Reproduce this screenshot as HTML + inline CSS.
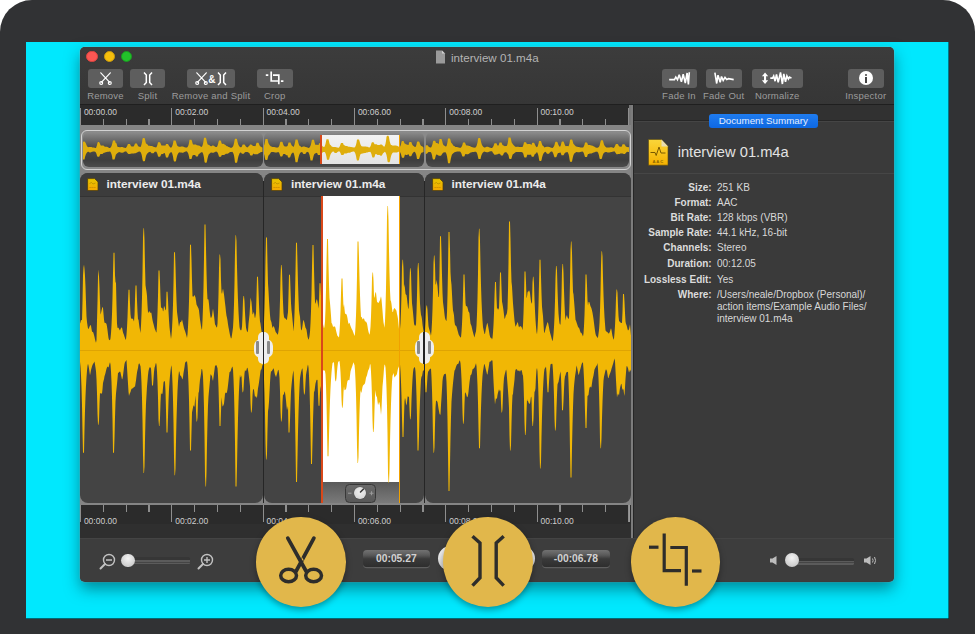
<!DOCTYPE html>
<html><head><meta charset="utf-8">
<style>
*{margin:0;padding:0;box-sizing:border-box}
html,body{width:975px;height:634px;overflow:hidden;background:#ffffff;font-family:"Liberation Sans",sans-serif}
.abs{position:absolute}
#frame{position:absolute;left:0;top:0;width:975px;height:700px;background:#313234;border-radius:32px}
#screen{position:absolute;left:26px;top:42px;width:923px;height:577px;background:#00e8fe;overflow:hidden;box-shadow:inset 0 -1px 0 rgba(0,50,60,0.7),inset -1px 0 0 rgba(0,50,60,0.6)}
#win{position:absolute;left:80px;top:47px;width:814px;height:535.3px;background:#3b3b3b;border-radius:5px;box-shadow:0 7px 15px rgba(0,45,55,0.5),0 0 0 0.6px rgba(190,200,200,0.35);overflow:hidden}
.tl{position:absolute;width:11.6px;height:11.6px;border-radius:50%;top:3.9px}
.title{position:absolute;left:371px;top:4.1px;font-size:11.6px;color:#b4b4b4;line-height:14px}
.btn{position:absolute;top:22px;height:19px;background:#5e5e5e;border-radius:3px}
.lbl{position:absolute;top:42.8px;font-size:9.5px;letter-spacing:0.22px;color:#9c9c9c;text-align:center;line-height:12px;white-space:nowrap}
.rtxt{position:absolute;font-size:8.5px;color:#cfcfcf;line-height:10px;white-space:nowrap}
.row{position:absolute;font-size:10px;line-height:12px;white-space:nowrap}
.row b{position:absolute;right:0;color:#dcdcdc}
.val{position:absolute;left:637px;font-size:10px;color:#d8d8d8;line-height:12.3px;white-space:nowrap}
.ch{position:absolute;top:125px;height:24px;background:#3d3d3d;border-radius:8px 8px 0 0}
.ctext{position:absolute;top:5px;left:26px;font-size:11.8px;font-weight:bold;color:#ececec;line-height:14px;white-space:nowrap}
.gold{position:absolute;width:89.6px;height:89.6px;border-radius:50%;background:#e1b74b;box-shadow:0 3px 6px rgba(0,0,0,0.35)}
</style></head><body>
<div id="frame"></div>
<div id="screen"></div>
<div id="win">
  <!-- title/toolbar -->
  <div class="abs" style="left:0;top:0;width:814px;height:57px;background:linear-gradient(#3c3c3c,#363636)"></div>
  <div class="abs" style="left:0;top:57px;width:814px;height:1px;background:#1f1f1f"></div>
  <div class="tl" style="left:6.3px;background:#fc5753;border:1px solid #de4540"></div>
  <div class="tl" style="left:23.6px;background:#f6bf0c;border:1px solid #c99a10"></div>
  <div class="tl" style="left:40.8px;background:#22c22a;border:1px solid #1a9a22"></div>
  <svg class="abs" style="left:355px;top:3px" width="11" height="14" viewBox="0 0 11 14"><path d="M1 0.5H7L10 3.5V13.5H1Z" fill="#9a9a9a"/><path d="M7 0.5V3.5H10" fill="#cfcfcf"/></svg>
  <div class="title">interview 01.m4a</div>
  <div class="btn" style="left:8px;width:35px"></div>
<div class="lbl" style="left:-14.5px;width:80px">Remove</div>
<div class="btn" style="left:50px;width:35px"></div>
<div class="lbl" style="left:27.5px;width:80px">Split</div>
<div class="btn" style="left:107px;width:48px"></div>
<div class="lbl" style="left:91.0px;width:80px">Remove and Split</div>
<div class="btn" style="left:177px;width:35.5px"></div>
<div class="lbl" style="left:154.75px;width:80px">Crop</div>
<div class="btn" style="left:581.5px;width:35px"></div>
<div class="lbl" style="left:559.0px;width:80px">Fade In</div>
<div class="btn" style="left:626px;width:35.5px"></div>
<div class="lbl" style="left:603.75px;width:80px">Fade Out</div>
<div class="btn" style="left:671.5px;width:51.5px"></div>
<div class="lbl" style="left:657.25px;width:80px">Normalize</div>
<div class="btn" style="left:768px;width:35.5px"></div>
<div class="lbl" style="left:745.75px;width:80px">Inspector</div>
<svg class="abs" style="left:19.5px;top:25px;overflow:visible" width="12" height="13"><g fill="none" stroke="#fff" stroke-width="1.2" stroke-linecap="round"><path d="M0.8 0.8L9.5 10.2M10.3 0.8L1.6 10.2"/><circle cx="1.2" cy="11" r="1.45"/><circle cx="9.8" cy="11" r="1.45"/></g></svg>
<svg class="abs" style="left:63px;top:24.5px;overflow:visible" width="10" height="14"><g fill="none" stroke="#fff" stroke-width="1.5"><path d="M1 0.5L3.3 3V10.5L1 13"/><path d="M9 0.5L6.7 3V10.5L9 13"/></g></svg>
<svg class="abs" style="left:115.5px;top:25px;overflow:visible" width="12" height="13"><g fill="none" stroke="#fff" stroke-width="1.2" stroke-linecap="round"><path d="M0.8 0.8L9.5 10.2M10.3 0.8L1.6 10.2"/><circle cx="1.2" cy="11" r="1.45"/><circle cx="9.8" cy="11" r="1.45"/></g></svg>
<div class="abs" style="left:128.2px;top:25.5px;font-size:10px;font-weight:bold;color:#fff;line-height:14px">&amp;</div>
<svg class="abs" style="left:137px;top:24.5px;overflow:visible" width="10" height="14"><g fill="none" stroke="#fff" stroke-width="1.5"><path d="M1 0.5L3.3 3V10.5L1 13"/><path d="M9 0.5L6.7 3V10.5L9 13"/></g></svg>
<svg class="abs" style="left:184px;top:23px;overflow:visible" width="22" height="16"><g fill="none" stroke="#fff" stroke-width="1.7"><path d="M1.8 5.2H4.3"/><path d="M7.2 1.6V11H14.2"/><path d="M9 5.2H14.8V14.2"/><path d="M16.9 11.2H19.4"/></g></svg>
<svg class="abs" style="left:588.5px;top:24.5px;overflow:visible" width="22" height="14"><path d="M0.2 7.6 L5.5 7.6 L6.8 5 L8.5 7.6 L10.2 2.8 L12.4 9.8 L14.2 2.3 L16.3 11.1 L18.1 1 L19.4 12.4 L20.3 0.2" fill="none" stroke="#fff" stroke-width="1.6" stroke-linejoin="miter" stroke-miterlimit="3"/></svg>
<svg class="abs" style="left:633px;top:24.5px;overflow:visible" width="22" height="14"><path d="M1.9 0.6 L3.7 11.5 L5 3.2 L7.2 10.2 L8.5 4.5 L10.2 8.4 L12 5.4 L13.7 7.6 L15.4 6.7 L20.7 7.6" fill="none" stroke="#fff" stroke-width="1.6" stroke-linejoin="miter" stroke-miterlimit="3"/></svg>
<svg class="abs" style="left:680px;top:23px;overflow:visible" width="34" height="16"><path d="M5.05 2.6L8.2 6.3H6.1V10.3H8.2L5.05 14L1.9 10.3H4V6.3H1.9Z" fill="#fff"/><path d="M10.3 8.1 L12.6 8.1 L13.7 5.9 L15.1 11.2 L16.5 4.5 L18.2 12.4 L20.5 2.5 L22.4 14 L23.8 3.9 L25.5 11.8 L26.9 5.9 L28.4 9 L29.5 7 L31.5 8.1" fill="none" stroke="#fff" stroke-width="1.6" stroke-linejoin="miter" stroke-miterlimit="3"/></svg>
<div class="abs" style="left:778.8px;top:24px;width:14.2px;height:14.2px;border-radius:50%;background:#fff"></div>
<div class="abs" style="left:784.9px;top:26.5px;width:2px;height:2px;background:#444;border-radius:1px"></div>
<div class="abs" style="left:784.9px;top:29.5px;width:2px;height:6.5px;background:#444"></div>
  <!-- ruler top -->
  <div class="abs" style="left:0;top:58px;width:552px;height:20px;background:#2b2b2b"></div>
  <div class="abs" style="left:-0.10px;top:61px;width:1.2px;height:17px;background:#8e8e8e"></div>
<div class="rtxt" style="left:3.90px;top:59.5px">00:00.00</div>
<div class="abs" style="left:22.73px;top:71.5px;width:1.2px;height:6.5px;background:#8e8e8e"></div>
<div class="abs" style="left:45.57px;top:71.5px;width:1.2px;height:6.5px;background:#8e8e8e"></div>
<div class="abs" style="left:68.40px;top:71.5px;width:1.2px;height:6.5px;background:#8e8e8e"></div>
<div class="abs" style="left:91.23px;top:61px;width:1.2px;height:17px;background:#8e8e8e"></div>
<div class="rtxt" style="left:95.23px;top:59.5px">00:02.00</div>
<div class="abs" style="left:114.06px;top:71.5px;width:1.2px;height:6.5px;background:#8e8e8e"></div>
<div class="abs" style="left:136.90px;top:71.5px;width:1.2px;height:6.5px;background:#8e8e8e"></div>
<div class="abs" style="left:159.73px;top:71.5px;width:1.2px;height:6.5px;background:#8e8e8e"></div>
<div class="abs" style="left:182.56px;top:61px;width:1.2px;height:17px;background:#8e8e8e"></div>
<div class="rtxt" style="left:186.56px;top:59.5px">00:04.00</div>
<div class="abs" style="left:205.40px;top:71.5px;width:1.2px;height:6.5px;background:#8e8e8e"></div>
<div class="abs" style="left:228.23px;top:71.5px;width:1.2px;height:6.5px;background:#8e8e8e"></div>
<div class="abs" style="left:251.06px;top:71.5px;width:1.2px;height:6.5px;background:#8e8e8e"></div>
<div class="abs" style="left:273.90px;top:61px;width:1.2px;height:17px;background:#8e8e8e"></div>
<div class="rtxt" style="left:277.90px;top:59.5px">00:06.00</div>
<div class="abs" style="left:296.73px;top:71.5px;width:1.2px;height:6.5px;background:#8e8e8e"></div>
<div class="abs" style="left:319.56px;top:71.5px;width:1.2px;height:6.5px;background:#8e8e8e"></div>
<div class="abs" style="left:342.39px;top:71.5px;width:1.2px;height:6.5px;background:#8e8e8e"></div>
<div class="abs" style="left:365.23px;top:61px;width:1.2px;height:17px;background:#8e8e8e"></div>
<div class="rtxt" style="left:369.23px;top:59.5px">00:08.00</div>
<div class="abs" style="left:388.06px;top:71.5px;width:1.2px;height:6.5px;background:#8e8e8e"></div>
<div class="abs" style="left:410.89px;top:71.5px;width:1.2px;height:6.5px;background:#8e8e8e"></div>
<div class="abs" style="left:433.73px;top:71.5px;width:1.2px;height:6.5px;background:#8e8e8e"></div>
<div class="abs" style="left:456.56px;top:61px;width:1.2px;height:17px;background:#8e8e8e"></div>
<div class="rtxt" style="left:460.56px;top:59.5px">00:10.00</div>
<div class="abs" style="left:479.39px;top:71.5px;width:1.2px;height:6.5px;background:#8e8e8e"></div>
<div class="abs" style="left:502.23px;top:71.5px;width:1.2px;height:6.5px;background:#8e8e8e"></div>
<div class="abs" style="left:525.06px;top:71.5px;width:1.2px;height:6.5px;background:#8e8e8e"></div>
<div class="abs" style="left:547.89px;top:61px;width:1.2px;height:17px;background:#8e8e8e"></div>
<div class="rtxt" style="left:551.89px;top:59.5px">00:12.00</div><div class="abs" style="left:549px;top:58px;width:2px;height:20px;background:#777"></div>
  <!-- main area -->
  <div class="abs" style="left:0;top:78px;width:552px;height:380px;background:#858585"></div>
  <div class="abs" style="left:1px;top:82.5px;width:550px;height:40.3px;border:1.8px solid #d2d2d2;border-radius:6px;background:#8a8a8a"></div>
<div class="abs" style="left:3px;top:85.3px;width:179.5px;height:34.7px;border-radius:6px;background:linear-gradient(#8c8c8c 0%,#4a4a4a 45%,#3e3e3e 80%,#4c4c4c 100%)"></div>
<div class="abs" style="left:184px;top:85.3px;width:159.5px;height:34.7px;border-radius:6px;background:linear-gradient(#8c8c8c 0%,#4a4a4a 45%,#3e3e3e 80%,#4c4c4c 100%)"></div>
<div class="abs" style="left:345.5px;top:85.3px;width:203.5px;height:34.7px;border-radius:6px;background:linear-gradient(#8c8c8c 0%,#4a4a4a 45%,#3e3e3e 80%,#4c4c4c 100%)"></div>
<div class="abs" style="left:240.8px;top:87.8px;width:78.5px;height:29.2px;background:linear-gradient(#f2f2f2,#e4e4e4)"></div>
<svg class="abs" style="left:0;top:0" width="552" height="130"><defs><clipPath id="ovc"><rect x="83" y="132" width="179.5" height="34"/><rect x="264" y="132" width="159.5" height="34"/><rect x="425.5" y="132" width="203.5" height="34"/></clipPath></defs><g transform="translate(-80 -47)" clip-path="url(#ovc)"><path d="M83.0 141.9 L83.5 141.6 L84.0 141.6 L84.5 141.6 L85.0 142.0 L85.5 142.7 L86.0 143.7 L86.5 145.0 L87.0 146.2 L87.5 146.7 L88.0 147.0 L88.5 147.2 L89.0 147.1 L89.5 147.0 L90.0 146.9 L90.5 146.9 L91.0 146.9 L91.5 147.0 L92.0 147.2 L92.5 147.4 L93.0 147.5 L93.5 147.5 L94.0 147.6 L94.5 147.7 L95.0 147.8 L95.5 148.0 L96.0 148.0 L96.5 146.6 L97.0 145.0 L97.5 142.7 L98.0 142.1 L98.5 142.1 L99.0 142.1 L99.5 142.7 L100.0 143.7 L100.5 145.1 L101.0 145.8 L101.5 145.6 L102.0 145.4 L102.5 145.4 L103.0 145.4 L103.5 145.5 L104.0 146.0 L104.5 146.5 L105.0 146.7 L105.5 146.8 L106.0 146.8 L106.5 146.8 L107.0 146.8 L107.5 147.0 L108.0 147.3 L108.5 147.6 L109.0 147.9 L109.5 148.0 L110.0 147.9 L110.5 147.5 L111.0 146.9 L111.5 146.0 L112.0 144.6 L112.5 142.4 L113.0 140.5 L113.5 140.5 L114.0 140.5 L114.5 140.5 L115.0 140.5 L115.5 142.6 L116.0 143.3 L116.5 143.3 L117.0 145.3 L117.5 146.8 L118.0 147.1 L118.5 147.1 L119.0 147.1 L119.5 147.2 L120.0 147.2 L120.5 147.2 L121.0 147.1 L121.5 147.1 L122.0 147.1 L122.5 147.1 L123.0 147.3 L123.5 147.5 L124.0 147.6 L124.5 147.7 L125.0 147.8 L125.5 147.9 L126.0 147.7 L126.5 147.1 L127.0 146.3 L127.5 145.0 L128.0 143.9 L128.5 143.9 L129.0 143.9 L129.5 143.9 L130.0 143.9 L130.5 145.2 L131.0 146.1 L131.5 146.4 L132.0 146.4 L132.5 146.4 L133.0 146.4 L133.5 146.4 L134.0 146.1 L134.5 144.7 L135.0 143.6 L135.5 143.6 L136.0 143.6 L136.5 143.6 L137.0 143.6 L137.5 144.9 L138.0 145.8 L138.5 146.5 L139.0 146.5 L139.5 146.8 L140.0 147.1 L140.5 147.0 L141.0 146.0 L141.5 144.6 L142.0 142.4 L142.5 139.0 L143.0 138.1 L143.5 138.1 L144.0 138.1 L144.5 138.1 L145.0 139.3 L145.5 141.7 L146.0 143.5 L146.5 143.8 L147.0 144.1 L147.5 144.5 L148.0 145.3 L148.5 145.8 L149.0 145.8 L149.5 145.8 L150.0 145.8 L150.5 145.9 L151.0 145.9 L151.5 145.9 L152.0 146.0 L152.5 146.3 L153.0 146.5 L153.5 146.7 L154.0 146.9 L154.5 147.0 L155.0 147.2 L155.5 147.3 L156.0 147.4 L156.5 146.9 L157.0 145.9 L157.5 144.5 L158.0 142.2 L158.5 142.2 L159.0 142.2 L159.5 142.2 L160.0 142.2 L160.5 143.2 L161.0 144.6 L161.5 145.5 L162.0 145.5 L162.5 145.5 L163.0 145.6 L163.5 145.4 L164.0 145.4 L164.5 145.4 L165.0 145.4 L165.5 145.5 L166.0 144.1 L166.5 144.1 L167.0 144.1 L167.5 144.1 L168.0 144.1 L168.5 144.9 L169.0 145.8 L169.5 146.6 L170.0 147.1 L170.5 147.4 L171.0 147.7 L171.5 147.2 L172.0 146.4 L172.5 145.2 L173.0 143.4 L173.5 140.4 L174.0 140.4 L174.5 140.4 L175.0 140.4 L175.5 140.4 L176.0 141.8 L176.5 143.6 L177.0 144.9 L177.5 145.9 L178.0 146.2 L178.5 146.5 L179.0 146.8 L179.5 146.7 L180.0 146.7 L180.5 146.7 L181.0 146.6 L181.5 146.5 L182.0 146.5 L182.5 146.5 L183.0 146.6 L183.5 146.8 L184.0 147.0 L184.5 147.2 L185.0 147.3 L185.5 147.4 L186.0 147.5 L186.5 147.6 L187.0 147.6 L187.5 147.1 L188.0 146.2 L188.5 144.9 L189.0 142.9 L189.5 139.7 L190.0 139.7 L190.5 139.7 L191.0 139.7 L191.5 139.7 L192.0 141.2 L192.5 143.1 L193.0 144.5 L193.5 144.5 L194.0 144.4 L194.5 144.4 L195.0 144.4 L195.5 144.5 L196.0 144.6 L196.5 144.9 L197.0 145.2 L197.5 145.3 L198.0 145.4 L198.5 145.5 L199.0 145.6 L199.5 145.7 L200.0 146.1 L200.5 146.5 L201.0 146.8 L201.5 147.0 L202.0 146.6 L202.5 145.4 L203.0 143.7 L203.5 141.0 L204.0 137.7 L204.5 137.7 L205.0 137.7 L205.5 137.7 L206.0 137.7 L206.5 140.1 L207.0 142.3 L207.5 143.9 L208.0 144.8 L208.5 144.8 L209.0 144.8 L209.5 145.2 L210.0 145.7 L210.5 146.0 L211.0 146.3 L211.5 146.2 L212.0 145.8 L212.5 145.6 L213.0 145.6 L213.5 145.6 L214.0 145.9 L214.5 146.2 L215.0 146.5 L215.5 146.9 L216.0 146.9 L216.5 147.0 L217.0 146.8 L217.5 145.8 L218.0 144.3 L218.5 141.9 L219.0 140.6 L219.5 140.6 L220.0 140.6 L220.5 140.6 L221.0 141.1 L221.5 143.1 L222.0 144.0 L222.5 143.8 L223.0 143.8 L223.5 143.8 L224.0 144.1 L224.5 144.4 L225.0 144.7 L225.5 145.1 L226.0 145.4 L226.5 145.9 L227.0 146.2 L227.5 146.3 L228.0 146.6 L228.5 146.9 L229.0 147.1 L229.5 147.3 L230.0 147.5 L230.5 147.7 L231.0 147.8 L231.5 147.7 L232.0 147.4 L232.5 147.1 L233.0 146.4 L233.5 145.2 L234.0 143.3 L234.5 140.4 L235.0 138.8 L235.5 138.8 L236.0 138.8 L236.5 138.8 L237.0 139.3 L237.5 141.8 L238.0 143.5 L238.5 144.9 L239.0 145.8 L239.5 146.6 L240.0 147.1 L240.5 147.3 L241.0 147.3 L241.5 147.0 L242.0 146.2 L242.5 144.8 L243.0 144.5 L243.5 144.5 L244.0 144.5 L244.5 144.5 L245.0 145.0 L245.5 145.9 L246.0 146.6 L246.5 147.1 L247.0 147.3 L247.5 147.4 L248.0 146.8 L248.5 146.5 L249.0 146.1 L249.5 145.4 L250.0 144.6 L250.5 144.6 L251.0 144.6 L251.5 144.8 L252.0 145.0 L252.5 145.5 L253.0 145.9 L253.5 145.9 L254.0 145.9 L254.5 145.9 L255.0 146.2 L255.5 146.0 L256.0 144.5 L256.5 142.8 L257.0 142.8 L257.5 142.8 L258.0 142.8 L258.5 142.8 L259.0 144.0 L259.5 145.2 L260.0 146.1 L260.5 146.6 L261.0 146.8 L261.5 147.1 L262.0 147.4 L262.5 147.5 L263.0 147.3 L263.5 146.6 L264.0 145.6 L264.5 143.9 L265.0 141.2 L265.5 139.0 L266.0 139.0 L266.5 139.0 L267.0 139.0 L267.5 139.0 L268.0 141.5 L268.5 143.3 L269.0 144.0 L269.5 144.9 L270.0 145.5 L270.5 146.1 L271.0 146.5 L271.5 146.6 L272.0 146.7 L272.5 147.0 L273.0 147.0 L273.5 147.0 L274.0 147.0 L274.5 147.1 L275.0 147.2 L275.5 147.3 L276.0 147.4 L276.5 147.5 L277.0 147.5 L277.5 147.6 L278.0 147.4 L278.5 147.1 L279.0 146.2 L279.5 144.9 L280.0 142.8 L280.5 141.7 L281.0 141.7 L281.5 141.7 L282.0 141.7 L282.5 142.1 L283.0 143.8 L283.5 145.0 L284.0 146.0 L284.5 146.3 L285.0 146.4 L285.5 146.4 L286.0 146.4 L286.5 146.5 L287.0 146.2 L287.5 145.9 L288.0 144.4 L288.5 142.6 L289.0 142.6 L289.5 142.6 L290.0 142.6 L290.5 142.6 L291.0 143.9 L291.5 145.1 L292.0 145.7 L292.5 146.1 L293.0 146.5 L293.5 146.9 L294.0 146.0 L294.5 144.5 L295.0 142.2 L295.5 139.5 L296.0 139.5 L296.5 139.5 L297.0 139.5 L297.5 139.5 L298.0 141.5 L298.5 143.3 L299.0 144.7 L299.5 145.7 L300.0 146.0 L300.5 146.3 L301.0 146.8 L301.5 147.2 L302.0 147.0 L302.5 146.7 L303.0 146.5 L303.5 146.5 L304.0 146.5 L304.5 146.6 L305.0 146.8 L305.5 147.0 L306.0 147.1 L306.5 147.2 L307.0 147.3 L307.5 147.5 L308.0 147.8 L308.5 147.9 L309.0 147.8 L309.5 147.4 L310.0 146.8 L310.5 145.8 L311.0 144.2 L311.5 141.8 L312.0 139.7 L312.5 139.7 L313.0 139.7 L313.5 139.7 L314.0 139.7 L314.5 142.0 L315.0 143.8 L315.5 145.0 L316.0 144.8 L316.5 144.8 L317.0 144.8 L317.5 144.8 L318.0 145.0 L318.5 144.9 L319.0 143.3 L319.5 143.3 L320.0 143.3 L320.5 143.3 L321.0 143.3 L321.5 144.5 L322.0 145.6 L322.5 146.3 L323.0 146.7 L323.5 146.8 L324.0 147.0 L324.5 146.7 L325.0 145.6 L325.5 143.9 L326.0 141.4 L326.5 139.2 L327.0 139.2 L327.5 139.2 L328.0 139.2 L328.5 139.2 L329.0 141.6 L329.5 143.4 L330.0 144.7 L330.5 145.1 L331.0 145.6 L331.5 146.2 L332.0 146.8 L332.5 146.8 L333.0 146.9 L333.5 147.1 L334.0 147.0 L334.5 147.0 L335.0 147.0 L335.5 147.0 L336.0 147.2 L336.5 147.3 L337.0 147.5 L337.5 147.6 L338.0 147.8 L338.5 147.8 L339.0 147.4 L339.5 146.8 L340.0 145.8 L340.5 144.2 L341.0 142.9 L341.5 142.9 L342.0 142.9 L342.5 142.9 L343.0 142.9 L343.5 144.4 L344.0 145.2 L344.5 145.2 L345.0 145.6 L345.5 146.0 L346.0 146.0 L346.5 146.0 L347.0 146.1 L347.5 146.2 L348.0 146.4 L348.5 146.7 L349.0 146.8 L349.5 146.8 L350.0 146.8 L350.5 146.9 L351.0 147.0 L351.5 147.1 L352.0 147.2 L352.5 147.3 L353.0 147.3 L353.5 147.4 L354.0 147.5 L354.5 147.6 L355.0 147.0 L355.5 146.2 L356.0 144.8 L356.5 142.7 L357.0 139.4 L357.5 139.4 L358.0 139.4 L358.5 139.4 L359.0 139.4 L359.5 140.9 L360.0 142.9 L360.5 144.4 L361.0 145.5 L361.5 146.3 L362.0 146.3 L362.5 146.4 L363.0 146.4 L363.5 146.4 L364.0 146.4 L364.5 146.4 L365.0 146.5 L365.5 146.6 L366.0 146.6 L366.5 146.7 L367.0 146.7 L367.5 146.8 L368.0 147.0 L368.5 147.3 L369.0 147.4 L369.5 147.5 L370.0 147.1 L370.5 146.2 L371.0 144.9 L371.5 142.9 L372.0 142.3 L372.5 142.3 L373.0 142.3 L373.5 142.3 L374.0 143.1 L374.5 144.3 L375.0 144.2 L375.5 144.2 L376.0 144.2 L376.5 144.2 L377.0 144.6 L377.5 145.0 L378.0 145.0 L378.5 145.0 L379.0 144.9 L379.5 144.9 L380.0 144.7 L380.5 144.5 L381.0 144.5 L381.5 144.5 L382.0 144.8 L382.5 145.3 L383.0 145.8 L383.5 146.3 L384.0 146.7 L384.5 146.6 L385.0 145.5 L385.5 143.8 L386.0 141.1 L386.5 136.9 L387.0 135.8 L387.5 135.8 L388.0 135.8 L388.5 135.8 L389.0 137.3 L389.5 140.2 L390.0 142.4 L390.5 144.0 L391.0 144.9 L391.5 145.0 L392.0 145.2 L392.5 145.6 L393.0 145.7 L393.5 145.6 L394.0 145.5 L394.5 145.5 L395.0 145.5 L395.5 145.6 L396.0 145.6 L396.5 145.7 L397.0 145.8 L397.5 146.0 L398.0 146.2 L398.5 146.4 L399.0 146.9 L399.5 147.2 L400.0 146.8 L400.5 145.8 L401.0 144.2 L401.5 141.8 L402.0 141.1 L402.5 141.1 L403.0 141.1 L403.5 141.1 L404.0 142.0 L404.5 143.4 L405.0 143.4 L405.5 143.9 L406.0 144.3 L406.5 144.4 L407.0 144.4 L407.5 144.7 L408.0 145.1 L408.5 145.0 L409.0 143.0 L409.5 142.0 L410.0 142.0 L410.5 142.0 L411.0 142.0 L411.5 142.3 L412.0 144.0 L412.5 145.1 L413.0 145.5 L413.5 145.9 L414.0 146.3 L414.5 146.8 L415.0 147.0 L415.5 146.9 L416.0 145.9 L416.5 144.4 L417.0 142.1 L417.5 141.5 L418.0 141.5 L418.5 141.5 L419.0 141.5 L419.5 142.3 L420.0 143.9 L420.5 145.1 L421.0 145.7 L421.5 146.1 L422.0 146.2 L422.5 146.5 L423.0 146.9 L423.5 147.2 L424.0 147.4 L424.5 147.4 L425.0 146.7 L425.5 145.6 L426.0 145.3 L426.5 145.3 L427.0 145.3 L427.5 145.3 L428.0 145.7 L428.5 146.5 L429.0 147.0 L429.5 147.2 L430.0 147.3 L430.5 147.4 L431.0 147.4 L431.5 146.7 L432.0 145.6 L432.5 144.0 L433.0 141.4 L433.5 140.7 L434.0 140.7 L434.5 140.7 L435.0 140.7 L435.5 141.6 L436.0 143.0 L436.5 143.0 L437.0 143.0 L437.5 143.3 L438.0 143.6 L438.5 144.2 L439.0 142.4 L439.5 138.9 L440.0 138.9 L440.5 138.9 L441.0 138.9 L441.5 138.9 L442.0 140.5 L442.5 142.6 L443.0 144.2 L443.5 145.0 L444.0 145.4 L444.5 145.7 L445.0 146.1 L445.5 146.4 L446.0 146.5 L446.5 145.9 L447.0 144.4 L447.5 142.1 L448.0 138.4 L448.5 138.4 L449.0 138.4 L449.5 138.4 L450.0 138.4 L450.5 140.1 L451.0 142.3 L451.5 143.1 L452.0 143.5 L452.5 144.3 L453.0 145.1 L453.5 145.8 L454.0 145.9 L454.5 146.1 L455.0 146.7 L455.5 146.9 L456.0 147.0 L456.5 147.0 L457.0 147.0 L457.5 147.2 L458.0 147.3 L458.5 147.5 L459.0 147.6 L459.5 147.7 L460.0 147.8 L460.5 147.8 L461.0 147.5 L461.5 146.8 L462.0 145.9 L462.5 144.4 L463.0 142.6 L463.5 142.6 L464.0 142.6 L464.5 142.6 L465.0 142.6 L465.5 143.9 L466.0 145.1 L466.5 145.4 L467.0 145.4 L467.5 145.4 L468.0 145.5 L468.5 145.7 L469.0 145.9 L469.5 145.9 L470.0 146.0 L470.5 146.4 L471.0 146.8 L471.5 146.9 L472.0 147.0 L472.5 147.2 L473.0 147.4 L473.5 147.5 L474.0 147.6 L474.5 147.7 L475.0 147.5 L475.5 147.4 L476.0 147.0 L476.5 146.1 L477.0 144.6 L477.5 142.4 L478.0 139.0 L478.5 138.1 L479.0 138.1 L479.5 138.1 L480.0 138.1 L480.5 139.3 L481.0 141.7 L481.5 143.5 L482.0 144.9 L482.5 145.8 L483.0 146.6 L483.5 147.1 L484.0 147.3 L484.5 147.4 L485.0 147.4 L485.5 147.2 L486.0 147.0 L486.5 146.8 L487.0 146.8 L487.5 146.8 L488.0 146.8 L488.5 147.0 L489.0 147.2 L489.5 147.4 L490.0 147.6 L490.5 147.8 L491.0 147.9 L491.5 147.9 L492.0 147.9 L492.5 147.5 L493.0 146.9 L493.5 146.0 L494.0 144.5 L494.5 143.2 L495.0 143.2 L495.5 143.2 L496.0 143.2 L496.5 143.2 L497.0 144.6 L497.5 145.5 L498.0 145.5 L498.5 145.5 L499.0 144.2 L499.5 142.4 L500.0 142.4 L500.5 142.4 L501.0 142.4 L501.5 142.4 L502.0 143.7 L502.5 145.0 L503.0 145.2 L503.5 145.4 L504.0 145.7 L504.5 146.1 L505.0 146.2 L505.5 146.1 L506.0 146.1 L506.5 145.9 L507.0 145.6 L507.5 144.0 L508.0 141.4 L508.5 137.4 L509.0 137.4 L509.5 137.4 L510.0 137.4 L510.5 137.4 L511.0 139.3 L511.5 141.7 L512.0 143.2 L512.5 143.6 L513.0 144.4 L513.5 145.1 L514.0 145.6 L514.5 146.1 L515.0 146.6 L515.5 146.8 L516.0 146.9 L516.5 146.8 L517.0 146.7 L517.5 146.7 L518.0 146.7 L518.5 146.8 L519.0 147.0 L519.5 147.0 L520.0 147.0 L520.5 147.0 L521.0 147.0 L521.5 147.1 L522.0 147.1 L522.5 146.9 L523.0 146.0 L523.5 144.5 L524.0 142.3 L524.5 142.3 L525.0 142.3 L525.5 142.3 L526.0 142.3 L526.5 143.3 L527.0 144.2 L527.5 144.1 L528.0 144.1 L528.5 144.0 L529.0 144.0 L529.5 144.0 L530.0 144.1 L530.5 144.2 L531.0 144.6 L531.5 145.0 L532.0 143.3 L532.5 142.8 L533.0 142.8 L533.5 142.8 L534.0 142.8 L534.5 143.4 L535.0 144.8 L535.5 145.8 L536.0 146.5 L536.5 147.1 L537.0 147.2 L537.5 146.4 L538.0 145.2 L538.5 143.4 L539.0 141.1 L539.5 141.1 L540.0 141.1 L540.5 141.1 L541.0 141.1 L541.5 142.8 L542.0 144.3 L542.5 145.4 L543.0 145.8 L543.5 146.2 L544.0 146.8 L544.5 147.4 L545.0 147.2 L545.5 147.1 L546.0 147.0 L546.5 146.8 L547.0 146.7 L547.5 146.7 L548.0 146.7 L548.5 146.7 L549.0 146.9 L549.5 147.1 L550.0 147.3 L550.5 147.5 L551.0 147.6 L551.5 147.8 L552.0 147.9 L552.5 148.0 L553.0 147.6 L553.5 147.1 L554.0 146.2 L554.5 144.9 L555.0 142.9 L555.5 141.8 L556.0 141.8 L556.5 141.8 L557.0 141.8 L557.5 142.2 L558.0 143.8 L558.5 145.1 L559.0 146.0 L559.5 146.5 L560.0 146.8 L560.5 145.9 L561.0 144.5 L561.5 142.2 L562.0 141.6 L562.5 141.6 L563.0 141.6 L563.5 141.6 L564.0 142.4 L564.5 144.0 L565.0 145.2 L565.5 146.1 L566.0 146.2 L566.5 146.1 L567.0 146.1 L567.5 146.1 L568.0 146.3 L568.5 146.3 L569.0 145.1 L569.5 143.2 L570.0 140.2 L570.5 139.4 L571.0 139.4 L571.5 139.4 L572.0 139.4 L572.5 140.4 L573.0 142.6 L573.5 144.1 L574.0 144.3 L574.5 144.9 L575.0 145.4 L575.5 146.0 L576.0 146.5 L576.5 146.6 L577.0 146.7 L577.5 146.8 L578.0 147.0 L578.5 147.1 L579.0 147.1 L579.5 147.2 L580.0 147.2 L580.5 147.4 L581.0 147.5 L581.5 147.5 L582.0 147.5 L582.5 147.6 L583.0 147.6 L583.5 147.0 L584.0 146.1 L584.5 144.7 L585.0 142.6 L585.5 142.6 L586.0 142.6 L586.5 142.6 L587.0 142.6 L587.5 143.6 L588.0 144.9 L588.5 145.0 L589.0 145.0 L589.5 145.0 L590.0 145.1 L590.5 145.2 L591.0 145.4 L591.5 145.5 L592.0 145.6 L592.5 145.7 L593.0 145.9 L593.5 146.2 L594.0 146.4 L594.5 146.8 L595.0 147.1 L595.5 147.4 L596.0 147.6 L596.5 147.7 L597.0 147.8 L597.5 147.8 L598.0 147.6 L598.5 147.3 L599.0 146.8 L599.5 145.7 L600.0 144.1 L600.5 141.7 L601.0 140.3 L601.5 140.3 L602.0 140.3 L602.5 140.3 L603.0 140.8 L603.5 142.8 L604.0 144.4 L604.5 145.5 L605.0 146.3 L605.5 146.8 L606.0 147.3 L606.5 147.4 L607.0 147.4 L607.5 147.5 L608.0 147.5 L608.5 147.5 L609.0 147.5 L609.5 147.4 L610.0 147.3 L610.5 147.2 L611.0 147.2 L611.5 147.2 L612.0 147.3 L612.5 147.6 L613.0 147.8 L613.5 147.9 L614.0 147.6 L614.5 147.0 L615.0 146.1 L615.5 144.7 L616.0 143.9 L616.5 143.9 L617.0 143.9 L617.5 143.9 L618.0 144.2 L618.5 145.3 L619.0 146.2 L619.5 146.6 L620.0 146.6 L620.5 146.7 L621.0 146.7 L621.5 146.7 L622.0 145.8 L622.5 144.3 L623.0 144.3 L623.5 144.3 L624.0 144.3 L624.5 144.3 L625.0 145.0 L625.5 146.0 L626.0 146.6 L626.5 146.8 L627.0 146.9 L627.5 147.1 L628.0 147.2 L628.5 147.3 L629.0 147.1 L629.0 152.1 L628.5 152.1 L628.0 152.0 L627.5 151.8 L627.0 151.7 L626.5 152.2 L626.0 152.7 L625.5 153.3 L625.0 154.1 L624.5 154.1 L624.0 154.1 L623.5 153.9 L623.0 153.6 L622.5 153.6 L622.0 153.6 L621.5 153.4 L621.0 153.2 L620.5 153.4 L620.0 153.7 L619.5 154.1 L619.0 154.1 L618.5 154.1 L618.0 154.0 L617.5 154.2 L617.0 154.2 L616.5 154.2 L616.0 153.5 L615.5 152.8 L615.0 152.0 L614.5 151.3 L614.0 151.4 L613.5 151.5 L613.0 151.6 L612.5 151.8 L612.0 151.9 L611.5 152.0 L611.0 152.1 L610.5 152.2 L610.0 152.3 L609.5 152.4 L609.0 152.6 L608.5 152.6 L608.0 152.6 L607.5 152.6 L607.0 152.3 L606.5 152.1 L606.0 152.0 L605.5 152.1 L605.0 152.3 L604.5 152.5 L604.0 152.8 L603.5 153.6 L603.0 154.6 L602.5 156.0 L602.0 158.0 L601.5 158.9 L601.0 158.9 L600.5 158.9 L600.0 158.9 L599.5 158.2 L599.0 155.5 L598.5 153.7 L598.0 152.6 L597.5 151.9 L597.0 151.6 L596.5 151.7 L596.0 151.8 L595.5 151.8 L595.0 151.9 L594.5 152.2 L594.0 152.4 L593.5 152.6 L593.0 152.7 L592.5 153.0 L592.0 153.3 L591.5 153.4 L591.0 153.4 L590.5 153.4 L590.0 153.4 L589.5 153.6 L589.0 154.0 L588.5 154.0 L588.0 154.1 L587.5 155.3 L587.0 157.0 L586.5 157.0 L586.0 157.0 L585.5 157.0 L585.0 157.0 L584.5 155.5 L584.0 153.8 L583.5 152.6 L583.0 151.9 L582.5 151.5 L582.0 151.5 L581.5 151.7 L581.0 151.8 L580.5 152.0 L580.0 152.1 L579.5 152.3 L579.0 152.3 L578.5 152.3 L578.0 152.3 L577.5 152.2 L577.0 151.9 L576.5 152.0 L576.0 152.2 L575.5 152.5 L575.0 152.9 L574.5 153.3 L574.0 153.9 L573.5 155.1 L573.0 156.7 L572.5 158.9 L572.0 161.8 L571.5 161.8 L571.0 161.8 L570.5 161.8 L570.0 161.8 L569.5 159.2 L569.0 156.1 L568.5 154.1 L568.0 152.9 L567.5 152.1 L567.0 152.1 L566.5 152.2 L566.0 152.4 L565.5 152.4 L565.0 152.8 L564.5 153.5 L564.0 154.6 L563.5 155.3 L563.0 155.3 L562.5 155.3 L562.0 155.3 L561.5 155.3 L561.0 153.7 L560.5 152.6 L560.0 152.5 L559.5 152.7 L559.0 152.9 L558.5 153.0 L558.0 153.1 L557.5 154.0 L557.0 155.2 L556.5 156.8 L556.0 157.2 L555.5 157.2 L555.0 157.2 L554.5 157.2 L554.0 156.1 L553.5 154.2 L553.0 152.9 L552.5 152.1 L552.0 151.5 L551.5 151.5 L551.0 151.5 L550.5 151.9 L550.0 152.3 L549.5 152.9 L549.0 153.8 L548.5 153.8 L548.0 153.8 L547.5 153.8 L547.0 153.8 L546.5 153.0 L546.0 152.2 L545.5 151.8 L545.0 151.9 L544.5 152.2 L544.0 152.7 L543.5 153.5 L543.0 154.5 L542.5 155.9 L542.0 157.8 L541.5 160.3 L541.0 160.9 L540.5 160.9 L540.0 160.9 L539.5 160.9 L539.0 159.2 L538.5 156.1 L538.0 154.2 L537.5 152.9 L537.0 152.1 L536.5 152.5 L536.0 153.4 L535.5 153.7 L535.0 153.7 L534.5 154.7 L534.0 156.1 L533.5 156.8 L533.0 156.8 L532.5 156.8 L532.0 156.8 L531.5 156.3 L531.0 154.4 L530.5 154.7 L530.0 154.8 L529.5 154.8 L529.0 154.8 L528.5 154.7 L528.0 154.7 L527.5 154.5 L527.0 155.5 L526.5 157.2 L526.0 157.6 L525.5 157.6 L525.0 157.6 L524.5 157.6 L524.0 156.5 L523.5 154.4 L523.0 153.0 L522.5 152.4 L522.0 152.3 L521.5 152.1 L521.0 152.0 L520.5 152.1 L520.0 152.1 L519.5 152.1 L519.0 152.0 L518.5 152.0 L518.0 152.0 L517.5 152.0 L517.0 152.0 L516.5 151.9 L516.0 151.9 L515.5 152.2 L515.0 152.7 L514.5 153.1 L514.0 153.4 L513.5 153.9 L513.0 154.0 L512.5 155.0 L512.0 156.5 L511.5 158.6 L511.0 159.1 L510.5 159.1 L510.0 159.1 L509.5 159.1 L509.0 157.7 L508.5 155.2 L508.0 154.3 L507.5 153.7 L507.0 153.1 L506.5 152.6 L506.0 152.1 L505.5 152.2 L505.0 152.4 L504.5 152.6 L504.0 153.1 L503.5 154.0 L503.0 155.3 L502.5 155.6 L502.0 155.6 L501.5 155.6 L501.0 155.6 L500.5 154.8 L500.0 153.7 L499.5 153.7 L499.0 153.7 L498.5 153.8 L498.0 154.0 L497.5 154.3 L497.0 154.4 L496.5 154.4 L496.0 154.5 L495.5 154.8 L495.0 154.8 L494.5 154.8 L494.0 154.3 L493.5 153.6 L493.0 152.9 L492.5 152.0 L492.0 151.3 L491.5 151.3 L491.0 151.3 L490.5 151.3 L490.0 151.4 L489.5 151.6 L489.0 151.8 L488.5 152.1 L488.0 152.3 L487.5 152.3 L487.0 152.3 L486.5 152.3 L486.0 152.1 L485.5 152.0 L485.0 151.8 L484.5 151.6 L484.0 151.8 L483.5 152.1 L483.0 152.4 L482.5 153.1 L482.0 154.0 L481.5 155.1 L481.0 156.7 L480.5 158.9 L480.0 158.9 L479.5 158.9 L479.0 158.9 L478.5 158.9 L478.0 157.0 L477.5 154.7 L477.0 153.2 L476.5 152.3 L476.0 151.7 L475.5 151.7 L475.0 151.8 L474.5 151.8 L474.0 151.9 L473.5 151.9 L473.0 151.9 L472.5 152.1 L472.0 152.3 L471.5 152.3 L471.0 152.4 L470.5 152.6 L470.0 152.9 L469.5 153.3 L469.0 153.7 L468.5 154.1 L468.0 154.2 L467.5 154.2 L467.0 154.2 L466.5 154.2 L466.0 154.1 L465.5 153.9 L465.0 154.8 L464.5 156.2 L464.0 156.6 L463.5 156.6 L463.0 156.6 L462.5 156.6 L462.0 155.6 L461.5 153.8 L461.0 152.7 L460.5 151.9 L460.0 151.5 L459.5 151.4 L459.0 151.5 L458.5 151.5 L458.0 151.5 L457.5 151.6 L457.0 151.6 L456.5 151.7 L456.0 151.8 L455.5 152.0 L455.0 152.0 L454.5 152.3 L454.0 152.7 L453.5 153.0 L453.0 153.5 L452.5 154.0 L452.0 154.6 L451.5 156.0 L451.0 157.9 L450.5 160.5 L450.0 163.2 L449.5 163.2 L449.0 163.2 L448.5 163.2 L448.0 163.2 L447.5 159.4 L447.0 156.3 L446.5 154.2 L446.0 152.9 L445.5 152.3 L445.0 152.3 L444.5 152.3 L444.0 152.4 L443.5 152.5 L443.0 152.8 L442.5 153.6 L442.0 154.2 L441.5 154.9 L441.0 155.7 L440.5 155.8 L440.0 155.8 L439.5 155.8 L439.0 155.7 L438.5 155.5 L438.0 155.2 L437.5 154.9 L437.0 154.6 L436.5 154.6 L436.0 155.1 L435.5 156.7 L435.0 158.8 L434.5 159.4 L434.0 159.4 L433.5 159.4 L433.0 159.4 L432.5 157.9 L432.0 155.3 L431.5 153.6 L431.0 152.5 L430.5 151.9 L430.0 151.9 L429.5 152.0 L429.0 152.0 L428.5 152.1 L428.0 152.4 L427.5 153.1 L427.0 153.8 L426.5 153.8 L426.0 153.8 L425.5 153.8 L425.0 153.8 L424.5 152.8 L424.0 152.1 L423.5 152.1 L423.0 152.2 L422.5 152.4 L422.0 152.5 L421.5 152.7 L421.0 153.5 L420.5 154.5 L420.0 155.9 L419.5 157.7 L419.0 159.1 L418.5 159.1 L418.0 159.1 L417.5 159.1 L417.0 159.1 L416.5 156.1 L416.0 154.1 L415.5 152.9 L415.0 152.1 L414.5 151.8 L414.0 151.9 L413.5 152.2 L413.0 152.7 L412.5 153.5 L412.0 154.5 L411.5 155.8 L411.0 156.2 L410.5 156.2 L410.0 156.2 L409.5 156.2 L409.0 155.3 L408.5 154.2 L408.0 154.2 L407.5 154.7 L407.0 154.9 L406.5 154.9 L406.0 154.9 L405.5 154.8 L405.0 154.6 L404.5 156.0 L404.0 157.8 L403.5 157.8 L403.0 157.8 L402.5 157.8 L402.0 157.8 L401.5 156.2 L401.0 154.2 L400.5 152.9 L400.0 152.1 L399.5 151.7 L399.0 151.8 L398.5 151.8 L398.0 152.0 L397.5 152.3 L397.0 152.4 L396.5 152.4 L396.0 152.4 L395.5 152.5 L395.0 152.5 L394.5 152.5 L394.0 152.5 L393.5 152.4 L393.0 152.4 L392.5 152.9 L392.0 153.7 L391.5 154.8 L391.0 156.3 L390.5 158.3 L390.0 161.0 L389.5 162.3 L389.0 162.3 L388.5 162.3 L388.0 162.3 L387.5 161.3 L387.0 157.5 L386.5 155.0 L386.0 153.5 L385.5 152.4 L385.0 151.8 L384.5 151.9 L384.0 152.4 L383.5 152.9 L383.0 153.3 L382.5 154.2 L382.0 155.3 L381.5 155.8 L381.0 155.8 L380.5 155.8 L380.0 155.3 L379.5 154.9 L379.0 154.8 L378.5 154.9 L378.0 154.9 L377.5 154.9 L377.0 154.6 L376.5 154.2 L376.0 154.1 L375.5 154.1 L375.0 155.3 L374.5 157.0 L374.0 157.4 L373.5 157.4 L373.0 157.4 L372.5 157.4 L372.0 156.3 L371.5 154.2 L371.0 152.9 L370.5 152.1 L370.0 151.8 L369.5 151.9 L369.0 151.9 L368.5 152.0 L368.0 152.2 L367.5 152.4 L367.0 152.5 L366.5 152.6 L366.0 152.8 L365.5 153.0 L365.0 153.1 L364.5 153.1 L364.0 153.2 L363.5 153.2 L363.0 153.3 L362.5 153.6 L362.0 153.8 L361.5 153.8 L361.0 153.8 L360.5 154.3 L360.0 155.6 L359.5 157.4 L359.0 159.8 L358.5 160.4 L358.0 160.4 L357.5 160.4 L357.0 160.4 L356.5 158.8 L356.0 155.9 L355.5 154.0 L355.0 152.8 L354.5 152.0 L354.0 151.6 L353.5 151.5 L353.0 151.6 L352.5 151.7 L352.0 151.8 L351.5 151.9 L351.0 152.1 L350.5 152.4 L350.0 152.7 L349.5 152.8 L349.0 152.8 L348.5 152.8 L348.0 152.8 L347.5 153.0 L347.0 153.3 L346.5 153.5 L346.0 153.6 L345.5 153.6 L345.0 153.6 L344.5 153.6 L344.0 153.7 L343.5 154.9 L343.0 155.1 L342.5 155.1 L342.0 155.1 L341.5 155.1 L341.0 154.4 L340.5 153.0 L340.0 152.2 L339.5 151.6 L339.0 151.3 L338.5 151.4 L338.0 151.7 L337.5 152.1 L337.0 152.6 L336.5 152.9 L336.0 152.9 L335.5 152.9 L335.0 152.9 L334.5 152.7 L334.0 151.9 L333.5 151.5 L333.0 151.5 L332.5 151.8 L332.0 152.2 L331.5 152.7 L331.0 153.5 L330.5 154.5 L330.0 155.9 L329.5 157.7 L329.0 159.7 L328.5 159.7 L328.0 159.7 L327.5 159.7 L327.0 159.7 L326.5 157.0 L326.0 154.7 L325.5 153.2 L325.0 152.3 L324.5 152.1 L324.0 152.0 L323.5 152.0 L323.0 152.2 L322.5 152.5 L322.0 152.9 L321.5 153.3 L321.0 153.4 L320.5 153.8 L320.0 155.0 L319.5 155.0 L319.0 155.0 L318.5 155.0 L318.0 155.0 L317.5 153.9 L317.0 152.8 L316.5 152.9 L316.0 153.0 L315.5 153.3 L315.0 153.7 L314.5 153.7 L314.0 154.8 L313.5 156.3 L313.0 158.3 L312.5 160.5 L312.0 160.5 L311.5 160.5 L311.0 160.5 L310.5 160.5 L310.0 157.5 L309.5 155.0 L309.0 153.5 L308.5 152.4 L308.0 151.8 L307.5 151.9 L307.0 152.1 L306.5 152.3 L306.0 152.9 L305.5 153.8 L305.0 154.0 L304.5 154.0 L304.0 154.0 L303.5 154.0 L303.0 153.4 L302.5 152.4 L302.0 152.0 L301.5 152.1 L301.0 152.4 L300.5 152.6 L300.0 153.3 L299.5 154.3 L299.0 155.6 L298.5 157.4 L298.0 159.7 L297.5 162.2 L297.0 162.2 L296.5 162.2 L296.0 162.2 L295.5 162.2 L295.0 158.8 L294.5 155.9 L294.0 154.0 L293.5 152.8 L293.0 152.4 L292.5 152.8 L292.0 153.2 L291.5 153.7 L291.0 154.8 L290.5 156.3 L290.0 157.4 L289.5 157.4 L289.0 157.4 L288.5 157.4 L288.0 157.4 L287.5 155.3 L287.0 155.3 L286.5 155.3 L286.0 155.0 L285.5 154.5 L285.0 154.1 L284.5 153.9 L284.0 154.0 L283.5 154.0 L283.0 154.6 L282.5 156.0 L282.0 156.4 L281.5 156.4 L281.0 156.4 L280.5 156.4 L280.0 155.4 L279.5 153.7 L279.0 152.6 L278.5 152.2 L278.0 152.1 L277.5 152.3 L277.0 152.4 L276.5 152.5 L276.0 152.5 L275.5 152.5 L275.0 152.4 L274.5 152.3 L274.0 152.2 L273.5 151.9 L273.0 152.0 L272.5 152.0 L272.0 152.1 L271.5 152.1 L271.0 152.3 L270.5 153.0 L270.0 153.8 L269.5 154.6 L269.0 155.1 L268.5 155.4 L268.0 157.1 L267.5 159.5 L267.0 160.0 L266.5 160.0 L266.0 160.0 L265.5 160.0 L265.0 158.5 L264.5 155.7 L264.0 153.9 L263.5 152.7 L263.0 152.0 L262.5 151.7 L262.0 151.9 L261.5 151.9 L261.0 152.0 L260.5 152.3 L260.0 152.7 L259.5 152.9 L259.0 153.2 L258.5 153.4 L258.0 153.9 L257.5 154.2 L257.0 154.3 L256.5 154.3 L256.0 154.3 L255.5 154.2 L255.0 154.2 L254.5 154.2 L254.0 153.9 L253.5 153.6 L253.0 154.0 L252.5 155.3 L252.0 155.6 L251.5 155.6 L251.0 155.6 L250.5 155.6 L250.0 154.8 L249.5 153.3 L249.0 152.9 L248.5 152.5 L248.0 152.2 L247.5 152.0 L247.0 151.9 L246.5 152.1 L246.0 152.1 L245.5 152.1 L245.0 152.2 L244.5 152.8 L244.0 153.6 L243.5 153.8 L243.0 153.8 L242.5 153.8 L242.0 153.8 L241.5 153.3 L241.0 152.5 L240.5 152.5 L240.0 152.8 L239.5 153.6 L239.0 154.7 L238.5 156.1 L238.0 158.1 L237.5 160.7 L237.0 162.7 L236.5 162.7 L236.0 162.7 L235.5 162.7 L235.0 162.7 L234.5 158.4 L234.0 155.6 L233.5 153.8 L233.0 152.7 L232.5 151.9 L232.0 151.8 L231.5 152.0 L231.0 152.1 L230.5 152.1 L230.0 152.1 L229.5 152.5 L229.0 152.8 L228.5 153.2 L228.0 153.5 L227.5 153.8 L227.0 153.8 L226.5 153.8 L226.0 153.8 L225.5 153.9 L225.0 154.4 L224.5 154.8 L224.0 154.9 L223.5 155.0 L223.0 155.0 L222.5 155.0 L222.0 155.0 L221.5 155.5 L221.0 156.8 L220.5 156.8 L220.0 156.8 L219.5 156.8 L219.0 156.8 L218.5 154.9 L218.0 153.4 L217.5 152.4 L217.0 151.8 L216.5 151.7 L216.0 151.6 L215.5 151.7 L215.0 151.9 L214.5 152.2 L214.0 152.5 L213.5 152.8 L213.0 152.8 L212.5 152.8 L212.0 152.7 L211.5 152.5 L211.0 152.4 L210.5 152.8 L210.0 153.2 L209.5 153.7 L209.0 154.1 L208.5 154.9 L208.0 156.5 L207.5 158.5 L207.0 161.3 L206.5 162.7 L206.0 162.7 L205.5 162.7 L205.0 162.7 L204.5 161.7 L204.0 157.7 L203.5 155.2 L203.0 153.5 L202.5 152.5 L202.0 152.1 L201.5 152.3 L201.0 152.5 L200.5 152.7 L200.0 153.2 L199.5 153.7 L199.0 153.8 L198.5 154.6 L198.0 156.0 L197.5 156.4 L197.0 156.4 L196.5 156.4 L196.0 156.4 L195.5 155.4 L195.0 155.0 L194.5 155.0 L194.0 155.0 L193.5 155.1 L193.0 155.3 L192.5 155.5 L192.0 157.3 L191.5 159.1 L191.0 159.1 L190.5 159.1 L190.0 159.1 L189.5 159.1 L189.0 156.6 L188.5 154.4 L188.0 153.1 L187.5 152.2 L187.0 151.6 L186.5 151.3 L186.0 151.4 L185.5 151.5 L185.0 151.8 L184.5 152.0 L184.0 152.2 L183.5 152.5 L183.0 152.7 L182.5 152.7 L182.0 152.7 L181.5 152.6 L181.0 152.5 L180.5 152.4 L180.0 152.4 L179.5 152.3 L179.0 152.4 L178.5 152.9 L178.0 153.7 L177.5 154.8 L177.0 156.2 L176.5 158.2 L176.0 160.9 L175.5 161.6 L175.0 161.6 L174.5 161.6 L174.0 161.6 L173.5 159.8 L173.0 156.5 L172.5 154.4 L172.0 153.0 L171.5 152.2 L171.0 152.0 L170.5 152.4 L170.0 152.9 L169.5 153.5 L169.0 154.6 L168.5 156.0 L168.0 157.4 L167.5 157.4 L167.0 157.4 L166.5 157.4 L166.0 157.4 L165.5 155.4 L165.0 153.7 L164.5 152.9 L164.0 153.0 L163.5 153.4 L163.0 153.9 L162.5 153.9 L162.0 153.9 L161.5 153.9 L161.0 154.7 L160.5 156.1 L160.0 156.8 L159.5 156.8 L159.0 156.8 L158.5 156.8 L158.0 156.3 L157.5 154.2 L157.0 152.9 L156.5 152.1 L156.0 151.6 L155.5 151.7 L155.0 151.8 L154.5 152.1 L154.0 152.7 L153.5 153.2 L153.0 153.2 L152.5 153.2 L152.0 153.2 L151.5 153.2 L151.0 152.4 L150.5 151.9 L150.0 151.8 L149.5 151.9 L149.0 152.0 L148.5 152.4 L148.0 152.8 L147.5 153.3 L147.0 154.0 L146.5 154.8 L146.0 156.1 L145.5 158.1 L145.0 160.7 L144.5 161.3 L144.0 161.3 L143.5 161.3 L143.0 161.3 L142.5 159.6 L142.0 156.4 L141.5 154.3 L141.0 153.0 L140.5 152.1 L140.0 151.7 L139.5 151.6 L139.0 151.6 L138.5 151.8 L138.0 152.0 L137.5 152.2 L137.0 152.5 L136.5 152.8 L136.0 153.1 L135.5 153.3 L135.0 153.3 L134.5 153.3 L134.0 153.4 L133.5 153.4 L133.0 153.4 L132.5 153.5 L132.0 153.5 L131.5 153.6 L131.0 153.7 L130.5 153.8 L130.0 153.9 L129.5 154.1 L129.0 154.1 L128.5 154.1 L128.0 153.7 L127.5 153.1 L127.0 152.4 L126.5 151.8 L126.0 151.3 L125.5 151.4 L125.0 151.5 L124.5 151.8 L124.0 152.1 L123.5 152.4 L123.0 152.6 L122.5 152.7 L122.0 152.7 L121.5 152.7 L121.0 152.5 L120.5 152.4 L120.0 152.2 L119.5 152.1 L119.0 152.2 L118.5 152.2 L118.0 152.7 L117.5 153.1 L117.0 153.5 L116.5 153.9 L116.0 154.6 L115.5 156.0 L115.0 157.9 L114.5 159.4 L114.0 159.4 L113.5 159.4 L113.0 159.4 L112.5 159.4 L112.0 156.2 L111.5 154.2 L111.0 152.9 L110.5 152.1 L110.0 151.6 L109.5 151.6 L109.0 151.8 L108.5 151.8 L108.0 151.8 L107.5 151.8 L107.0 151.9 L106.5 152.0 L106.0 152.2 L105.5 152.3 L105.0 152.5 L104.5 152.7 L104.0 152.8 L103.5 153.0 L103.0 153.5 L102.5 153.9 L102.0 153.9 L101.5 153.9 L101.0 153.9 L100.5 153.9 L100.0 154.8 L99.5 156.3 L99.0 156.7 L98.5 156.7 L98.0 156.7 L97.5 156.7 L97.0 155.7 L96.5 153.9 L96.0 152.7 L95.5 152.1 L95.0 151.8 L94.5 151.6 L94.0 151.5 L93.5 151.5 L93.0 151.6 L92.5 151.7 L92.0 151.8 L91.5 152.0 L91.0 152.2 L90.5 152.4 L90.0 152.4 L89.5 152.4 L89.0 152.1 L88.5 151.8 L88.0 151.7 L87.5 152.0 L87.0 152.5 L86.5 153.2 L86.0 154.1 L85.5 155.4 L85.0 157.1 L84.5 159.4 L84.0 159.4 L83.5 159.4 L83.0 159.4Z" fill="#dfae0c"/></g></svg>
<div class="abs" style="left:240px;top:87.8px;width:1.6px;height:29.2px;background:#d9481a"></div>
<div class="abs" style="left:318.6px;top:87.8px;width:1px;height:29.2px;background:#f0a000"></div>
  <svg width="0" height="0" style="position:absolute"><defs><linearGradient id="hg" x1="0" y1="0" x2="0" y2="1"><stop offset="0" stop-color="#e6c400"/><stop offset="1" stop-color="#f6a800"/></linearGradient></defs></svg>
<div class="abs" style="left:0px;top:125.5px;width:183.4px;height:330.5px;background:#444;border-radius:8px"></div>
<div class="abs" style="left:0px;top:125.5px;width:183.4px;height:24.2px;background:#3c3c3c;border-radius:8px 8px 0 0;border-bottom:1.2px solid #333"></div>
<svg class="abs" style="left:6.8px;top:131.3px" width="12" height="13" viewBox="0 0 12 13"><path d="M0.6 0.6H7.6L11 4V12.6H0.6Z" fill="url(#hg)" stroke="#4a3a08" stroke-width="0.7"/><path d="M2.5 5.5L4.5 4.5L6 6L8.5 5" fill="none" stroke="#b08a00" stroke-width="0.7"/><path d="M2.5 9.5H9" stroke="#c08400" stroke-width="0.9" stroke-dasharray="1.2 0.8"/></svg>
<div class="ctext" style="left:26.5px;top:129.6px">interview 01.m4a</div>
<div class="abs" style="left:184.4px;top:125.5px;width:159.6px;height:330.5px;background:#444;border-radius:8px"></div>
<div class="abs" style="left:184.4px;top:125.5px;width:159.6px;height:24.2px;background:#3c3c3c;border-radius:8px 8px 0 0;border-bottom:1.2px solid #333"></div>
<svg class="abs" style="left:191.20000000000002px;top:131.3px" width="12" height="13" viewBox="0 0 12 13"><path d="M0.6 0.6H7.6L11 4V12.6H0.6Z" fill="url(#hg)" stroke="#4a3a08" stroke-width="0.7"/><path d="M2.5 5.5L4.5 4.5L6 6L8.5 5" fill="none" stroke="#b08a00" stroke-width="0.7"/><path d="M2.5 9.5H9" stroke="#c08400" stroke-width="0.9" stroke-dasharray="1.2 0.8"/></svg>
<div class="ctext" style="left:210.9px;top:129.6px">interview 01.m4a</div>
<div class="abs" style="left:345px;top:125.5px;width:206px;height:330.5px;background:#444;border-radius:8px"></div>
<div class="abs" style="left:345px;top:125.5px;width:206px;height:24.2px;background:#3c3c3c;border-radius:8px 8px 0 0;border-bottom:1.2px solid #333"></div>
<svg class="abs" style="left:351.8px;top:131.3px" width="12" height="13" viewBox="0 0 12 13"><path d="M0.6 0.6H7.6L11 4V12.6H0.6Z" fill="url(#hg)" stroke="#4a3a08" stroke-width="0.7"/><path d="M2.5 5.5L4.5 4.5L6 6L8.5 5" fill="none" stroke="#b08a00" stroke-width="0.7"/><path d="M2.5 9.5H9" stroke="#c08400" stroke-width="0.9" stroke-dasharray="1.2 0.8"/></svg>
<div class="ctext" style="left:371.5px;top:129.6px">interview 01.m4a</div>
<div class="abs" style="left:241.8px;top:149.3px;width:77.4px;height:286.1px;background:#ffffff"></div>
<div class="abs" style="left:241.8px;top:435.4px;width:77.4px;height:20.6px;background:linear-gradient(#5a5a5a,#7a7a7a)"></div>
<svg class="abs" style="left:0;top:0" width="552" height="460"><defs><clipPath id="cb"><rect x="80" y="196" width="551" height="307"/></clipPath></defs><g transform="translate(-80 -47)" clip-path="url(#cb)"><path d="M80.0 323.4 L80.5 322.3 L81.0 319.9 L81.5 319.9 L82.0 320.6 L82.5 301.5 L83.0 275.4 L83.5 267.5 L84.0 264.4 L84.5 269.0 L85.0 275.9 L85.5 286.7 L86.0 302.2 L86.5 316.5 L87.0 322.0 L87.5 325.4 L88.0 328.5 L88.5 329.1 L89.0 328.0 L89.5 326.8 L90.0 325.6 L90.5 324.9 L91.0 325.8 L91.5 328.7 L92.0 331.4 L92.5 331.9 L93.0 332.0 L93.5 333.2 L94.0 335.0 L94.5 336.9 L95.0 339.2 L95.5 341.2 L96.0 342.7 L96.5 340.0 L97.0 320.6 L97.5 301.4 L98.0 276.7 L98.5 269.5 L99.0 276.1 L99.5 287.3 L100.0 302.8 L100.5 314.4 L101.0 312.9 L101.5 310.7 L102.0 308.4 L102.5 306.8 L103.0 308.1 L103.5 313.6 L104.0 319.5 L104.5 322.7 L105.0 322.8 L105.5 322.9 L106.0 323.3 L106.5 323.9 L107.0 326.4 L107.5 330.0 L108.0 334.2 L108.5 338.1 L109.0 339.7 L109.5 340.0 L110.0 340.2 L110.5 338.3 L111.0 333.0 L111.5 325.3 L112.0 313.9 L112.5 297.2 L113.0 272.7 L113.5 252.8 L114.0 252.8 L114.5 252.8 L115.0 275.2 L115.5 282.3 L116.0 282.7 L116.5 305.2 L117.0 323.6 L117.5 327.9 L118.0 327.8 L118.5 327.8 L119.0 328.8 L119.5 329.8 L120.0 330.4 L120.5 329.1 L121.0 328.2 L121.5 327.6 L122.0 327.4 L122.5 330.0 L123.0 332.6 L123.5 333.8 L124.0 335.1 L124.5 336.7 L125.0 338.1 L125.5 339.8 L126.0 339.3 L126.5 334.5 L127.0 327.5 L127.5 317.2 L128.0 302.0 L128.5 289.7 L129.0 289.7 L129.5 289.7 L130.0 303.5 L130.5 314.2 L131.0 318.3 L131.5 318.4 L132.0 319.0 L132.5 318.5 L133.0 318.9 L133.5 320.3 L134.0 321.4 L134.5 315.0 L135.0 298.8 L135.5 285.6 L136.0 285.6 L136.5 285.6 L137.0 300.4 L137.5 311.7 L138.0 319.5 L138.5 319.6 L139.0 323.8 L139.5 327.6 L140.0 330.1 L140.5 333.0 L141.0 325.4 L141.5 314.1 L142.0 297.5 L142.5 273.0 L143.0 237.2 L143.5 228.2 L144.0 228.2 L144.5 240.3 L145.0 265.6 L145.5 285.0 L146.0 288.4 L146.5 291.5 L147.0 295.7 L147.5 305.3 L148.0 312.6 L148.5 312.8 L149.0 311.2 L149.5 311.2 L150.0 312.5 L150.5 313.0 L151.0 312.3 L151.5 313.5 L152.0 316.9 L152.5 320.1 L153.0 322.3 L153.5 324.1 L154.0 325.9 L154.5 328.0 L155.0 329.6 L155.5 330.6 L156.0 332.1 L156.5 332.5 L157.0 324.6 L157.5 312.8 L158.0 295.7 L158.5 270.4 L159.0 270.4 L159.5 270.4 L160.0 282.0 L160.5 297.6 L161.0 308.0 L161.5 307.4 L162.0 307.9 L162.5 308.4 L163.0 311.4 L163.5 310.5 L164.0 305.9 L164.5 306.7 L165.0 308.2 L165.5 310.1 L166.0 310.2 L166.5 291.7 L167.0 291.7 L167.5 291.7 L168.0 300.1 L168.5 311.6 L169.0 320.3 L169.5 327.1 L170.0 331.5 L170.5 335.2 L171.0 338.9 L171.5 335.3 L172.0 328.6 L172.5 318.8 L173.0 304.5 L173.5 283.3 L174.0 252.3 L174.5 252.3 L175.0 252.3 L175.5 266.5 L176.0 285.7 L176.5 300.5 L177.0 311.8 L177.5 315.8 L178.0 319.2 L178.5 323.5 L179.0 326.7 L179.5 324.6 L180.0 322.4 L180.5 322.0 L181.0 322.0 L181.5 321.0 L182.0 319.4 L182.5 321.5 L183.0 323.7 L183.5 326.0 L184.0 328.2 L184.5 329.7 L185.0 331.1 L185.5 332.6 L186.0 334.3 L186.5 336.0 L187.0 337.9 L187.5 334.2 L188.0 327.0 L188.5 316.5 L189.0 301.0 L189.5 278.2 L190.0 244.8 L190.5 244.8 L191.0 244.8 L191.5 260.1 L192.0 280.8 L192.5 296.7 L193.0 296.1 L193.5 297.1 L194.0 295.7 L194.5 295.0 L195.0 296.2 L195.5 297.4 L196.0 300.8 L196.5 304.4 L197.0 305.6 L197.5 306.4 L198.0 307.4 L198.5 308.6 L199.0 310.5 L199.5 315.1 L200.0 319.5 L200.5 322.8 L201.0 326.1 L201.5 328.8 L202.0 329.8 L202.5 320.5 L203.0 307.0 L203.5 287.0 L204.0 257.7 L204.5 224.6 L205.0 224.6 L205.5 224.6 L206.0 248.3 L206.5 271.7 L207.0 289.7 L207.5 299.4 L208.0 299.0 L208.5 300.0 L209.0 304.0 L209.5 309.4 L210.0 313.8 L210.5 317.1 L211.0 318.2 L211.5 317.0 L212.0 316.0 L212.5 311.7 L213.0 308.5 L213.5 312.0 L214.0 315.8 L214.5 320.0 L215.0 324.4 L215.5 324.9 L216.0 326.2 L216.5 327.2 L217.0 327.5 L217.5 323.8 L218.0 311.7 L218.5 294.0 L219.0 268.0 L219.5 254.4 L220.0 254.4 L220.5 259.3 L221.0 280.2 L221.5 292.2 L222.0 294.1 L222.5 291.0 L223.0 288.4 L223.5 291.5 L224.0 294.5 L224.5 298.6 L225.0 302.9 L225.5 306.9 L226.0 311.9 L226.5 315.7 L227.0 317.8 L227.5 320.6 L228.0 324.2 L228.5 327.3 L229.0 329.8 L229.5 332.4 L230.0 335.1 L230.5 337.1 L231.0 338.5 L231.5 338.1 L232.0 334.8 L232.5 331.2 L233.0 327.6 L233.5 318.6 L234.0 304.1 L234.5 282.8 L235.0 251.5 L235.5 235.2 L236.0 235.2 L236.5 241.1 L237.0 266.2 L237.5 285.4 L238.0 300.3 L238.5 311.7 L239.0 320.4 L239.5 327.1 L240.0 329.2 L240.5 329.9 L241.0 330.5 L241.5 329.7 L242.0 326.5 L242.5 315.7 L243.0 299.9 L243.5 295.9 L244.0 295.9 L244.5 301.3 L245.0 312.4 L245.5 321.0 L246.0 327.6 L246.5 329.7 L247.0 331.6 L247.5 332.3 L248.0 330.8 L248.5 323.7 L249.0 319.2 L249.5 314.8 L250.0 306.4 L250.5 297.4 L251.0 299.7 L251.5 302.1 L252.0 307.9 L252.5 314.0 L253.0 314.5 L253.5 312.2 L254.0 312.5 L254.5 316.2 L255.0 318.6 L255.5 316.0 L256.0 313.1 L256.5 296.1 L257.0 276.8 L257.5 276.8 L258.0 276.8 L258.5 290.6 L259.0 304.2 L259.5 314.7 L260.0 321.4 L260.5 323.7 L261.0 327.6 L261.5 331.3 L262.0 332.7 L262.5 333.7 L263.0 333.5 L263.5 330.4 L264.0 321.4 L264.5 308.3 L265.0 288.9 L265.5 260.5 L266.0 237.4 L266.5 237.4 L267.0 237.4 L267.5 263.3 L268.0 283.3 L268.5 290.9 L269.0 300.6 L269.5 308.1 L270.0 314.9 L270.5 319.8 L271.0 321.0 L271.5 322.5 L272.0 325.4 L272.5 328.0 L273.0 326.9 L273.5 325.9 L274.0 326.7 L274.5 328.0 L275.0 329.7 L275.5 331.4 L276.0 332.6 L276.5 333.1 L277.0 333.7 L277.5 334.7 L278.0 334.1 L278.5 331.3 L279.0 326.6 L279.5 315.9 L280.0 300.2 L280.5 277.0 L281.0 265.0 L281.5 265.0 L282.0 269.3 L282.5 287.9 L283.0 302.1 L283.5 313.1 L284.0 316.7 L284.5 318.0 L285.0 318.5 L285.5 318.5 L286.0 319.1 L286.5 320.3 L287.0 319.3 L287.5 315.5 L288.0 312.0 L288.5 294.5 L289.0 274.7 L289.5 274.7 L290.0 274.7 L290.5 288.9 L291.0 302.9 L291.5 310.1 L292.0 314.2 L292.5 319.7 L293.0 325.1 L293.5 331.5 L294.0 324.7 L294.5 313.1 L295.0 296.1 L295.5 271.0 L296.0 242.7 L296.5 242.7 L297.0 242.7 L297.5 263.0 L298.0 283.0 L298.5 298.4 L299.0 310.2 L299.5 313.9 L300.0 316.8 L300.5 323.4 L301.0 329.4 L301.5 330.4 L302.0 328.8 L302.5 325.8 L303.0 321.8 L303.5 319.8 L304.0 321.3 L304.5 323.0 L305.0 325.4 L305.5 327.7 L306.0 328.6 L306.5 329.8 L307.0 333.1 L307.5 336.6 L308.0 338.4 L308.5 339.7 L309.0 338.5 L309.5 336.0 L310.0 331.7 L310.5 323.3 L311.0 311.0 L311.5 293.0 L312.0 266.5 L312.5 244.9 L313.0 244.9 L313.5 244.9 L314.0 269.1 L314.5 287.7 L315.0 302.0 L315.5 304.1 L316.0 301.8 L316.5 299.4 L317.0 299.5 L317.5 301.5 L318.0 305.1 L318.5 308.6 L319.0 300.8 L319.5 283.2 L320.0 283.2 L320.5 283.2 L321.0 295.8 L321.5 308.2 L322.0 317.8 L322.5 322.4 L323.0 323.9 L323.5 326.2 L324.0 328.5 L324.5 326.6 L325.0 321.6 L325.5 308.9 L326.0 289.8 L326.5 261.9 L327.0 239.1 L327.5 239.1 L328.0 239.1 L328.5 264.6 L329.0 284.3 L329.5 297.9 L330.0 303.1 L330.5 309.0 L331.0 315.6 L331.5 322.9 L332.0 323.4 L332.5 325.1 L333.0 326.8 L333.5 326.7 L334.0 326.6 L334.5 326.5 L335.0 326.4 L335.5 327.9 L336.0 330.4 L336.5 332.6 L337.0 334.4 L337.5 335.9 L338.0 336.3 L338.5 337.0 L339.0 337.4 L339.5 331.7 L340.0 323.4 L340.5 311.1 L341.0 293.1 L341.5 278.5 L342.0 278.5 L342.5 278.5 L343.0 294.9 L343.5 307.6 L344.0 303.9 L344.5 308.9 L345.0 313.6 L345.5 314.1 L346.0 313.8 L346.5 314.5 L347.0 315.8 L347.5 318.3 L348.0 321.6 L348.5 323.9 L349.0 323.3 L349.5 322.8 L350.0 324.4 L350.5 326.0 L351.0 327.3 L351.5 328.6 L352.0 329.5 L352.5 330.3 L353.0 331.7 L353.5 333.0 L354.0 334.4 L354.5 336.0 L355.0 333.7 L355.5 326.3 L356.0 315.5 L356.5 299.5 L357.0 276.1 L357.5 241.6 L358.0 241.6 L358.5 241.6 L359.0 257.4 L359.5 278.7 L360.0 295.1 L360.5 307.7 L361.0 317.3 L361.5 316.8 L362.0 317.8 L362.5 319.2 L363.0 319.2 L363.5 318.2 L364.0 318.4 L364.5 320.1 L365.0 321.4 L365.5 321.5 L366.0 321.5 L366.5 322.4 L367.0 323.5 L367.5 326.3 L368.0 329.4 L368.5 331.7 L369.0 333.5 L369.5 334.8 L370.0 332.1 L370.5 326.8 L371.0 316.4 L371.5 300.9 L372.0 278.1 L372.5 272.4 L373.0 272.4 L373.5 280.1 L374.0 296.2 L374.5 298.1 L375.0 294.3 L375.5 292.3 L376.0 292.6 L376.5 297.3 L377.0 301.8 L377.5 302.3 L378.0 302.8 L378.5 303.0 L379.0 301.9 L379.5 301.0 L380.0 300.3 L380.5 298.1 L381.0 296.2 L381.5 299.3 L382.0 305.0 L382.5 310.7 L383.0 317.5 L383.5 322.4 L384.0 325.1 L384.5 327.8 L385.0 321.0 L385.5 307.6 L386.0 287.9 L386.5 259.0 L387.0 216.5 L387.5 205.9 L388.0 205.9 L388.5 220.2 L389.0 250.2 L389.5 273.1 L390.0 290.8 L390.5 300.3 L391.0 301.3 L391.5 303.9 L392.0 308.6 L392.5 312.1 L393.0 311.9 L393.5 309.5 L394.0 308.7 L394.5 308.0 L395.0 308.5 L395.5 309.4 L396.0 309.7 L396.5 311.1 L397.0 314.0 L397.5 316.1 L398.0 319.0 L398.5 324.2 L399.0 329.0 L399.5 329.7 L400.0 329.1 L400.5 323.3 L401.0 311.0 L401.5 292.9 L402.0 266.3 L402.5 259.7 L403.0 259.7 L403.5 268.7 L404.0 287.4 L404.5 283.9 L405.0 288.9 L405.5 293.7 L406.0 294.7 L406.5 294.9 L407.0 298.5 L407.5 303.2 L408.0 307.6 L408.5 309.3 L409.0 302.0 L409.5 279.8 L410.0 268.2 L410.5 268.2 L411.0 272.4 L411.5 290.2 L412.0 303.2 L412.5 307.3 L413.0 312.3 L413.5 317.7 L414.0 323.4 L414.5 325.3 L415.0 325.6 L415.5 325.8 L416.0 324.2 L416.5 312.3 L417.0 294.9 L417.5 269.3 L418.0 262.9 L418.5 262.9 L419.0 271.6 L419.5 289.6 L420.0 303.5 L420.5 310.3 L421.0 314.7 L421.5 316.6 L422.0 319.2 L422.5 324.5 L423.0 328.1 L423.5 331.0 L424.0 333.5 L424.5 332.4 L425.0 330.6 L425.5 321.8 L426.0 308.8 L426.5 305.5 L427.0 305.5 L427.5 309.9 L428.0 319.1 L428.5 326.1 L429.0 328.4 L429.5 329.9 L430.0 331.7 L430.5 333.7 L431.0 335.7 L431.5 330.8 L432.0 322.0 L432.5 309.2 L433.0 290.3 L433.5 262.5 L434.0 255.5 L434.5 255.5 L435.0 264.9 L435.5 284.5 L436.0 284.2 L436.5 279.8 L437.0 283.0 L437.5 286.2 L438.0 292.4 L438.5 296.9 L439.0 297.0 L439.5 272.4 L440.0 236.3 L440.5 236.3 L441.0 236.3 L441.5 252.8 L442.0 275.2 L442.5 292.4 L443.0 302.2 L443.5 305.9 L444.0 309.7 L444.5 314.5 L445.0 318.1 L445.5 319.4 L446.0 320.5 L446.5 320.9 L447.0 312.4 L447.5 295.1 L448.0 269.5 L448.5 232.0 L449.0 232.0 L449.5 232.0 L450.0 249.2 L450.5 272.4 L451.0 280.4 L451.5 284.8 L452.0 294.0 L452.5 303.4 L453.0 310.6 L453.5 312.5 L454.0 315.3 L454.5 322.1 L455.0 324.8 L455.5 325.6 L456.0 325.9 L456.5 326.5 L457.0 328.3 L457.5 330.2 L458.0 332.1 L458.5 334.1 L459.0 335.2 L459.5 336.0 L460.0 336.7 L460.5 337.4 L461.0 337.3 L461.5 332.1 L462.0 324.0 L462.5 312.0 L463.0 294.4 L463.5 274.6 L464.0 274.6 L464.5 274.6 L465.0 288.8 L465.5 302.9 L466.0 306.4 L466.5 306.0 L467.0 306.2 L467.5 307.5 L468.0 309.6 L468.5 311.8 L469.0 311.9 L469.5 313.4 L470.0 318.9 L470.5 323.6 L471.0 324.8 L471.5 326.1 L472.0 328.3 L472.5 330.6 L473.0 332.6 L473.5 334.3 L474.0 335.9 L474.5 337.4 L475.0 335.0 L475.5 333.1 L476.0 331.3 L476.5 325.5 L477.0 314.2 L477.5 297.7 L478.0 273.4 L478.5 237.7 L479.0 228.8 L479.5 228.8 L480.0 240.9 L480.5 266.0 L481.0 285.3 L481.5 300.2 L482.0 311.6 L482.5 320.4 L483.0 327.1 L483.5 329.6 L484.0 331.8 L484.5 334.1 L485.0 333.7 L485.5 330.8 L486.0 328.0 L486.5 325.7 L487.0 323.5 L487.5 323.1 L488.0 325.6 L488.5 328.3 L489.0 331.0 L489.5 334.2 L490.0 336.4 L490.5 337.7 L491.0 337.8 L491.5 338.2 L492.0 339.5 L492.5 338.0 L493.0 332.6 L493.5 324.7 L494.0 313.1 L494.5 296.0 L495.0 282.1 L495.5 282.1 L496.0 282.1 L496.5 297.7 L497.0 309.3 L497.5 307.8 L498.0 309.9 L498.5 309.0 L499.0 308.1 L499.5 292.9 L500.0 272.5 L500.5 272.5 L501.0 272.5 L501.5 287.1 L502.0 301.6 L502.5 303.9 L503.0 307.0 L503.5 310.4 L504.0 314.7 L504.5 318.7 L505.0 318.5 L505.5 316.4 L506.0 315.1 L506.5 314.4 L507.0 312.8 L507.5 308.7 L508.0 290.1 L508.5 262.3 L509.0 221.4 L509.5 221.4 L510.0 221.4 L510.5 240.1 L511.0 265.4 L511.5 281.7 L512.0 286.2 L512.5 294.9 L513.0 303.2 L513.5 309.2 L514.0 315.0 L514.5 320.4 L515.0 324.0 L515.5 326.8 L516.0 325.8 L516.5 324.7 L517.0 323.4 L517.5 322.0 L518.0 323.1 L518.5 325.6 L519.0 327.5 L519.5 326.8 L520.0 325.9 L520.5 326.3 L521.0 326.6 L521.5 327.0 L522.0 328.2 L522.5 330.3 L523.0 324.9 L523.5 313.3 L524.0 296.3 L524.5 271.4 L525.0 271.4 L525.5 271.4 L526.0 282.8 L526.5 298.2 L527.0 296.7 L527.5 292.6 L528.0 291.6 L528.5 291.5 L529.0 290.2 L529.5 291.2 L530.0 293.0 L530.5 297.4 L531.0 301.6 L531.5 303.0 L532.0 303.7 L532.5 282.2 L533.0 276.8 L533.5 276.8 L534.0 284.1 L534.5 299.2 L535.0 310.8 L535.5 319.8 L536.0 326.7 L536.5 331.9 L537.0 334.3 L537.5 328.7 L538.0 318.9 L538.5 304.6 L539.0 283.5 L539.5 259.7 L540.0 259.7 L540.5 259.7 L541.0 276.7 L541.5 293.6 L542.0 306.5 L542.5 311.6 L543.0 316.1 L543.5 324.0 L544.0 331.7 L544.5 333.2 L545.0 331.0 L545.5 328.9 L546.0 327.1 L546.5 325.4 L547.0 323.8 L547.5 322.3 L548.0 322.4 L548.5 325.0 L549.0 327.6 L549.5 330.2 L550.0 332.6 L550.5 334.3 L551.0 336.0 L551.5 337.9 L552.0 339.7 L552.5 341.1 L553.0 339.0 L553.5 334.1 L554.0 326.9 L554.5 316.4 L555.0 300.8 L555.5 278.0 L556.0 266.1 L556.5 266.1 L557.0 270.4 L557.5 288.7 L558.0 302.8 L558.5 313.6 L559.0 319.1 L559.5 323.2 L560.0 324.4 L560.5 324.5 L561.0 312.8 L561.5 295.6 L562.0 270.3 L562.5 264.0 L563.0 264.0 L563.5 272.5 L564.0 290.3 L564.5 304.0 L565.0 314.6 L565.5 320.4 L566.0 317.6 L566.5 315.9 L567.0 315.1 L567.5 317.5 L568.0 317.8 L568.5 319.2 L569.0 318.0 L569.5 303.2 L570.0 281.5 L570.5 249.6 L571.0 241.6 L571.5 241.6 L572.0 252.4 L572.5 274.9 L573.0 292.1 L573.5 294.2 L574.0 300.2 L574.5 306.6 L575.0 313.1 L575.5 319.8 L576.0 320.7 L576.5 322.2 L577.0 323.8 L577.5 325.3 L578.0 326.8 L578.5 327.6 L579.0 328.0 L579.5 328.9 L580.0 330.7 L580.5 332.5 L581.0 332.7 L581.5 333.0 L582.0 334.2 L582.5 335.3 L583.0 336.6 L583.5 333.4 L584.0 325.9 L584.5 314.8 L585.0 298.5 L585.5 274.6 L586.0 274.6 L586.5 274.6 L587.0 285.5 L587.5 300.3 L588.0 305.8 L588.5 302.3 L589.0 301.8 L589.5 302.4 L590.0 304.4 L590.5 306.2 L591.0 307.3 L591.5 308.5 L592.0 310.6 L592.5 312.7 L593.0 315.8 L593.5 318.9 L594.0 322.9 L594.5 327.1 L595.0 330.7 L595.5 333.7 L596.0 335.5 L596.5 336.3 L597.0 337.1 L597.5 338.0 L598.0 337.2 L598.5 333.7 L599.0 329.9 L599.5 322.9 L600.0 310.4 L600.5 292.1 L601.0 265.2 L601.5 251.2 L602.0 251.2 L602.5 256.2 L603.0 277.8 L603.5 294.4 L604.0 307.2 L604.5 317.0 L605.0 323.8 L605.5 330.3 L606.0 331.2 L606.5 331.5 L607.0 331.9 L607.5 332.3 L608.0 332.8 L608.5 333.5 L609.0 333.5 L609.5 332.5 L610.0 331.4 L610.5 329.5 L611.0 328.2 L611.5 330.0 L612.0 333.2 L612.5 335.9 L613.0 337.8 L613.5 339.7 L614.0 338.5 L614.5 333.3 L615.0 325.7 L615.5 314.5 L616.0 298.1 L616.5 289.6 L617.0 289.6 L617.5 292.7 L618.0 305.8 L618.5 315.9 L619.0 320.7 L619.5 321.4 L620.0 322.0 L620.5 322.5 L621.0 323.0 L621.5 322.9 L622.0 322.7 L622.5 311.7 L623.0 293.9 L623.5 293.9 L624.0 293.9 L624.5 302.0 L625.0 313.0 L625.5 321.5 L626.0 323.9 L626.5 324.9 L627.0 326.8 L627.5 329.0 L628.0 330.5 L628.5 330.0 L629.0 329.2 L629.5 326.8 L630.0 324.2 L630.5 330.3 L631.0 335.7 L631.0 371.4 L630.5 370.5 L630.0 369.5 L629.5 371.4 L629.0 372.4 L628.5 370.5 L628.0 368.3 L627.5 367.0 L627.0 366.1 L626.5 366.5 L626.0 372.7 L625.5 379.0 L625.0 387.2 L624.5 395.9 L624.0 393.4 L623.5 389.4 L623.0 389.2 L622.5 389.7 L622.0 387.5 L621.5 383.7 L621.0 384.2 L620.5 386.0 L620.0 388.1 L619.5 391.6 L619.0 395.6 L618.5 394.6 L618.0 393.4 L617.5 395.1 L617.0 397.5 L616.5 389.0 L616.0 380.2 L615.5 370.8 L615.0 361.3 L614.5 358.4 L614.0 360.2 L613.5 362.2 L613.0 363.9 L612.5 365.6 L612.0 367.2 L611.5 368.8 L611.0 370.7 L610.5 372.2 L610.0 373.6 L609.5 374.7 L609.0 376.2 L608.5 378.3 L608.0 377.8 L607.5 374.4 L607.0 371.3 L606.5 370.1 L606.0 369.2 L605.5 370.2 L605.0 372.3 L604.5 374.4 L604.0 376.4 L603.5 380.5 L603.0 389.9 L602.5 402.0 L602.0 417.9 L601.5 438.4 L601.0 448.3 L600.5 448.3 L600.0 441.0 L599.5 411.8 L599.0 391.9 L598.5 378.4 L598.0 369.1 L597.5 363.1 L597.0 364.9 L596.5 365.7 L596.0 366.5 L595.5 367.4 L595.0 368.4 L594.5 369.6 L594.0 372.5 L593.5 375.4 L593.0 377.5 L592.5 379.7 L592.0 383.2 L591.5 386.7 L591.0 387.7 L590.5 386.4 L590.0 386.9 L589.5 387.8 L589.0 390.7 L588.5 395.1 L588.0 395.4 L587.5 395.9 L587.0 409.9 L586.5 428.1 L586.0 428.1 L585.5 428.1 L585.0 411.9 L584.5 392.0 L584.0 378.4 L583.5 369.2 L583.0 362.9 L582.5 362.2 L582.0 363.3 L581.5 364.5 L581.0 366.4 L580.5 368.5 L580.0 370.3 L579.5 372.0 L579.0 374.3 L578.5 374.9 L578.0 372.4 L577.5 369.7 L577.0 367.3 L576.5 365.4 L576.0 369.9 L575.5 373.3 L575.0 376.4 L574.5 381.2 L574.0 386.2 L573.5 394.1 L573.0 407.6 L572.5 425.1 L572.0 447.8 L571.5 477.4 L571.0 477.4 L570.5 477.4 L570.0 451.0 L569.5 418.6 L569.0 396.6 L568.5 381.5 L568.0 371.8 L567.5 371.9 L567.0 372.1 L566.5 372.3 L566.0 373.2 L565.5 375.2 L565.0 376.2 L564.5 380.1 L564.0 389.3 L563.5 401.3 L563.0 410.2 L562.5 410.2 L562.0 410.2 L561.5 390.8 L561.0 377.6 L560.5 371.4 L560.0 373.5 L559.5 376.4 L559.0 379.3 L558.5 382.1 L558.0 383.0 L557.5 384.4 L557.0 394.8 L556.5 408.5 L556.0 426.3 L555.5 430.4 L555.0 430.4 L554.5 418.9 L554.0 396.7 L553.5 381.6 L553.0 371.4 L552.5 364.4 L552.0 363.4 L551.5 363.9 L551.0 363.9 L550.5 364.4 L550.0 368.9 L549.5 374.8 L549.0 382.4 L548.5 392.3 L548.0 392.3 L547.5 392.3 L547.0 383.5 L546.5 372.6 L546.0 366.5 L545.5 367.5 L545.0 368.2 L544.5 369.1 L544.0 372.8 L543.5 379.8 L543.0 388.9 L542.5 400.8 L542.0 416.2 L541.5 436.3 L541.0 462.4 L540.5 468.5 L540.0 468.5 L539.5 451.5 L539.0 419.0 L538.5 396.8 L538.0 381.7 L537.5 371.4 L537.0 368.0 L536.5 369.8 L536.0 376.7 L535.5 388.3 L535.0 391.2 L534.5 391.7 L534.0 402.4 L533.5 418.3 L533.0 425.9 L532.5 425.9 L532.0 420.2 L531.5 397.7 L531.0 396.5 L530.5 399.9 L530.0 403.4 L529.5 403.8 L529.0 403.4 L528.5 402.4 L528.0 400.9 L527.5 400.9 L527.0 398.9 L526.5 411.8 L526.0 430.5 L525.5 434.9 L525.0 434.9 L524.5 422.7 L524.0 399.3 L523.5 383.4 L523.0 375.4 L522.5 374.4 L522.0 371.6 L521.5 370.2 L521.0 369.8 L520.5 370.7 L520.0 371.7 L519.5 371.0 L519.0 370.2 L518.5 370.8 L518.0 371.1 L517.5 370.6 L517.0 369.4 L516.5 368.9 L516.0 369.4 L515.5 369.8 L515.0 372.7 L514.5 379.7 L514.0 384.3 L513.5 388.3 L513.0 394.0 L512.5 395.1 L512.0 406.1 L511.5 423.2 L511.0 445.3 L510.5 450.5 L510.0 450.5 L509.5 436.1 L509.0 408.4 L508.5 398.3 L508.0 391.0 L507.5 384.5 L507.0 377.9 L506.5 371.1 L506.0 369.5 L505.5 371.4 L505.0 373.2 L504.5 375.2 L504.0 377.9 L503.5 384.8 L503.0 395.4 L502.5 409.3 L502.0 412.5 L501.5 412.5 L501.0 403.5 L500.5 389.7 L500.0 391.6 L499.5 390.5 L499.0 389.3 L498.5 391.0 L498.0 392.8 L497.5 394.9 L497.0 398.6 L496.5 399.1 L496.0 398.1 L495.5 401.0 L495.0 404.5 L494.5 398.0 L494.0 390.2 L493.5 381.2 L493.0 370.4 L492.5 361.0 L492.0 360.1 L491.5 360.6 L491.0 361.1 L490.5 361.4 L490.0 361.7 L489.5 361.7 L489.0 365.3 L488.5 368.3 L488.0 371.2 L487.5 374.4 L487.0 374.3 L486.5 372.1 L486.0 370.0 L485.5 367.9 L485.0 365.8 L484.5 363.7 L484.0 364.9 L483.5 368.3 L483.0 371.2 L482.5 376.0 L482.0 384.0 L481.5 394.4 L481.0 407.9 L480.5 425.4 L480.0 448.3 L479.5 448.3 L479.0 448.3 L478.5 427.9 L478.0 402.9 L477.5 385.8 L477.0 374.2 L476.5 366.3 L476.0 363.2 L475.5 364.7 L475.0 366.3 L474.5 367.4 L474.0 368.3 L473.5 368.7 L473.0 368.7 L472.5 369.6 L472.0 372.1 L471.5 374.3 L471.0 374.8 L470.5 375.2 L470.0 378.7 L469.5 382.3 L469.0 386.9 L468.5 392.0 L468.0 395.5 L467.5 397.0 L467.0 397.2 L466.5 395.6 L466.0 393.4 L465.5 392.9 L465.0 392.0 L464.5 403.6 L464.0 419.9 L463.5 423.7 L463.0 423.7 L462.5 413.1 L462.0 392.8 L461.5 379.0 L461.0 369.6 L460.5 363.2 L460.0 360.7 L459.5 360.6 L459.0 362.0 L458.5 363.5 L458.0 363.9 L457.5 364.0 L457.0 364.6 L456.5 365.5 L456.0 366.7 L455.5 368.4 L455.0 369.9 L454.5 370.4 L454.0 374.2 L453.5 378.8 L453.0 383.2 L452.5 388.8 L452.0 394.8 L451.5 401.5 L451.0 417.2 L450.5 437.6 L450.0 464.1 L449.5 490.9 L449.0 490.9 L448.5 490.9 L448.0 453.4 L447.5 420.3 L447.0 397.7 L446.5 382.3 L446.0 374.8 L445.5 373.6 L445.0 374.0 L444.5 374.1 L444.0 374.4 L443.5 375.8 L443.0 377.3 L442.5 381.1 L442.0 389.8 L441.5 397.8 L441.0 405.3 L440.5 414.6 L440.0 414.8 L439.5 413.8 L439.0 411.3 L438.5 408.5 L438.0 404.9 L437.5 402.0 L437.0 401.3 L436.5 400.6 L436.0 401.1 L435.5 407.4 L435.0 424.8 L434.5 447.5 L434.0 452.8 L433.5 452.8 L433.0 438.1 L432.5 409.8 L432.0 390.5 L431.5 377.4 L431.0 368.7 L430.5 368.8 L430.0 368.7 L429.5 369.5 L429.0 370.4 L428.5 371.1 L428.0 372.1 L427.5 376.2 L427.0 384.2 L426.5 392.3 L426.0 392.3 L425.5 392.3 L425.0 381.0 L424.5 371.3 L424.0 371.2 L423.5 370.3 L423.0 370.6 L422.5 373.6 L422.0 376.2 L421.5 376.5 L421.0 379.6 L420.5 388.7 L420.0 400.5 L419.5 415.8 L419.0 435.7 L418.5 450.5 L418.0 450.5 L417.5 450.5 L417.0 418.3 L416.5 396.3 L416.0 381.4 L415.5 371.2 L415.0 367.5 L414.5 367.0 L414.0 367.9 L413.5 368.7 L413.0 372.6 L412.5 379.5 L412.0 388.6 L411.5 400.3 L411.0 415.6 L410.5 419.2 L410.0 419.2 L409.5 409.3 L409.0 396.8 L408.5 397.2 L408.0 395.7 L407.5 397.6 L407.0 402.8 L406.5 405.4 L406.0 403.7 L405.5 399.8 L405.0 397.9 L404.5 401.3 L404.0 416.8 L403.5 437.1 L403.0 437.1 L402.5 437.1 L402.0 419.0 L401.5 396.8 L401.0 381.7 L400.5 371.4 L400.0 364.4 L399.5 365.0 L399.0 366.3 L398.5 367.4 L398.0 368.4 L397.5 371.1 L397.0 373.8 L396.5 375.1 L396.0 375.4 L395.5 375.9 L395.0 376.9 L394.5 377.5 L394.0 375.5 L393.5 373.1 L393.0 374.6 L392.5 376.0 L392.0 381.7 L391.5 391.4 L391.0 404.0 L390.5 420.4 L390.0 441.7 L389.5 469.5 L389.0 482.8 L388.5 482.8 L388.0 472.9 L387.5 433.5 L387.0 406.7 L386.5 388.4 L386.0 376.0 L385.5 367.5 L385.0 365.0 L384.5 364.4 L384.0 368.6 L383.5 375.6 L383.0 381.2 L382.5 386.4 L382.0 397.2 L381.5 409.3 L381.0 415.0 L380.5 409.4 L380.0 405.6 L379.5 402.8 L379.0 402.1 L378.5 404.1 L378.0 404.9 L377.5 401.5 L377.0 397.2 L376.5 396.4 L376.0 395.3 L375.5 390.0 L375.0 395.7 L374.5 409.7 L374.0 427.8 L373.5 432.0 L373.0 432.0 L372.5 420.2 L372.0 397.7 L371.5 382.3 L371.0 371.8 L370.5 364.7 L370.0 364.0 L369.5 367.3 L369.0 369.1 L368.5 369.7 L368.0 370.9 L367.5 373.1 L367.0 375.2 L366.5 376.5 L366.0 377.7 L365.5 380.7 L365.0 383.2 L364.5 384.1 L364.0 384.5 L363.5 385.0 L363.0 385.5 L362.5 386.9 L362.0 389.8 L361.5 392.4 L361.0 392.5 L360.5 390.1 L360.0 398.4 L359.5 413.1 L359.0 432.3 L358.5 457.2 L358.0 463.0 L357.5 463.0 L357.0 446.8 L356.5 415.7 L356.0 394.6 L355.5 380.2 L355.0 370.4 L354.5 365.1 L354.0 364.1 L353.5 362.2 L353.0 363.6 L352.5 365.5 L352.0 366.9 L351.5 368.3 L351.0 369.7 L350.5 371.5 L350.0 375.4 L349.5 379.7 L349.0 380.5 L348.5 379.8 L348.0 380.3 L347.5 381.1 L347.0 383.5 L346.5 387.0 L346.0 389.3 L345.5 389.6 L345.0 389.9 L344.5 390.2 L344.0 386.2 L343.5 391.9 L343.0 404.7 L342.5 407.7 L342.0 407.7 L341.5 399.4 L341.0 383.5 L340.5 372.6 L340.0 365.2 L339.5 361.0 L339.0 361.3 L338.5 361.6 L338.0 362.5 L337.5 366.4 L337.0 371.4 L336.5 378.0 L336.0 381.2 L335.5 381.2 L335.0 378.9 L334.5 369.5 L334.0 363.1 L333.5 361.9 L333.0 362.5 L332.5 363.2 L332.0 367.3 L331.5 372.7 L331.0 379.7 L330.5 388.8 L330.0 400.6 L329.5 416.0 L329.0 436.0 L328.5 456.3 L328.0 456.3 L327.5 456.3 L327.0 428.0 L326.5 402.9 L326.0 385.9 L325.5 374.3 L325.0 371.2 L324.5 370.6 L324.0 370.3 L323.5 370.3 L323.0 370.8 L322.5 372.7 L322.0 376.8 L321.5 381.4 L321.0 386.1 L320.5 388.3 L320.0 392.8 L319.5 405.8 L319.0 405.8 L318.5 405.8 L318.0 394.2 L317.5 379.9 L317.0 379.7 L316.5 380.1 L316.0 381.8 L315.5 383.4 L315.0 387.2 L314.5 391.6 L314.0 391.6 L313.5 404.3 L313.0 420.8 L312.5 442.3 L312.0 464.0 L311.5 464.0 L311.0 464.0 L310.5 433.7 L310.0 406.8 L309.5 388.5 L309.0 376.1 L308.5 367.6 L308.0 364.4 L307.5 366.3 L307.0 369.5 L306.5 372.0 L306.0 374.8 L305.5 382.4 L305.0 392.3 L304.5 394.6 L304.0 394.6 L303.5 388.2 L303.0 375.8 L302.5 368.4 L302.0 368.7 L301.5 370.4 L301.0 372.3 L300.5 375.0 L300.0 378.3 L299.5 386.9 L299.0 398.2 L298.5 412.9 L298.0 431.9 L297.5 456.8 L297.0 481.9 L296.5 481.9 L296.0 481.9 L295.5 446.8 L295.0 415.8 L294.5 394.6 L294.0 380.2 L293.5 370.4 L293.0 372.7 L292.5 376.1 L292.0 380.4 L291.5 385.5 L291.0 391.4 L290.5 404.0 L290.0 420.5 L289.5 432.6 L289.0 432.6 L288.5 432.6 L288.0 406.1 L287.5 408.4 L287.0 410.2 L286.5 406.1 L286.0 400.5 L285.5 395.9 L285.0 392.5 L284.5 391.3 L284.0 393.7 L283.5 395.1 L283.0 394.4 L282.5 401.9 L282.0 417.7 L281.5 421.4 L281.0 421.4 L280.5 411.1 L280.0 391.5 L279.5 378.1 L279.0 372.7 L278.5 369.7 L278.0 370.2 L277.5 372.0 L277.0 373.9 L276.5 375.6 L276.0 377.3 L275.5 375.8 L275.0 374.7 L274.5 372.7 L274.0 369.7 L273.5 368.2 L273.0 369.1 L272.5 370.1 L272.0 370.8 L271.5 371.4 L271.0 371.2 L270.5 375.0 L270.0 382.8 L269.5 392.3 L269.0 401.7 L268.5 408.0 L268.0 411.2 L267.5 429.7 L267.0 453.9 L266.5 459.5 L266.0 459.5 L265.5 443.8 L265.0 413.7 L264.5 393.2 L264.0 379.2 L263.5 370.3 L263.0 364.7 L262.5 364.7 L262.0 366.9 L261.5 369.4 L261.0 369.6 L260.5 371.1 L260.0 374.9 L259.5 378.8 L259.0 382.4 L258.5 385.7 L258.0 388.2 L257.5 393.3 L257.0 397.6 L256.5 397.8 L256.0 396.1 L255.5 396.5 L255.0 396.9 L254.5 393.8 L254.0 390.0 L253.5 389.0 L253.0 389.4 L252.5 395.4 L252.0 409.3 L251.5 412.5 L251.0 412.5 L250.5 403.5 L250.0 386.3 L249.5 381.8 L249.0 377.4 L248.5 372.9 L248.0 370.0 L247.5 367.8 L247.0 368.0 L246.5 369.8 L246.0 371.3 L245.5 370.8 L245.0 370.1 L244.5 373.5 L244.0 380.7 L243.5 390.1 L243.0 392.3 L242.5 392.3 L242.0 386.2 L241.5 375.5 L241.0 376.9 L240.5 377.4 L240.0 374.6 L239.5 380.9 L239.0 390.3 L238.5 402.6 L238.0 418.6 L237.5 439.4 L237.0 466.4 L236.5 486.4 L236.0 486.4 L235.5 486.4 L235.0 442.7 L234.5 412.9 L234.0 392.7 L233.5 378.9 L233.0 369.5 L232.5 366.6 L232.0 367.2 L231.5 368.3 L231.0 370.1 L230.5 371.4 L230.0 371.7 L229.5 372.2 L229.0 376.3 L228.5 381.1 L228.0 385.2 L227.5 389.3 L227.0 392.0 L226.5 392.9 L226.0 393.0 L225.5 392.5 L225.0 394.0 L224.5 399.1 L224.0 403.8 L223.5 405.1 L223.0 406.3 L222.5 406.2 L222.0 402.2 L221.5 397.3 L221.0 411.4 L220.5 425.9 L220.0 425.9 L219.5 425.9 L219.0 405.7 L218.5 387.7 L218.0 375.5 L217.5 368.2 L217.0 366.7 L216.5 365.3 L216.0 365.3 L215.5 365.5 L215.0 365.9 L214.5 369.7 L214.0 373.4 L213.5 377.3 L213.0 381.0 L212.5 379.2 L212.0 376.3 L211.5 375.5 L211.0 374.5 L210.5 374.6 L210.0 380.2 L209.5 385.7 L209.0 390.9 L208.5 396.4 L208.0 405.5 L207.5 422.3 L207.0 444.2 L206.5 472.7 L206.0 486.4 L205.5 486.4 L205.0 476.3 L204.5 435.8 L204.0 408.2 L203.5 389.5 L203.0 376.7 L202.5 371.5 L202.0 368.8 L201.5 369.3 L201.0 373.8 L200.5 377.0 L200.0 379.9 L199.5 385.1 L199.0 391.5 L198.5 393.1 L198.0 401.9 L197.5 417.7 L197.0 421.4 L196.5 421.4 L196.0 411.1 L195.5 395.7 L195.0 400.7 L194.5 406.4 L194.0 406.6 L193.5 405.0 L193.0 407.5 L192.5 409.9 L192.0 412.4 L191.5 431.3 L191.0 450.5 L190.5 450.5 L190.0 450.5 L189.5 423.7 L189.0 400.0 L188.5 383.9 L188.0 372.9 L187.5 365.4 L187.0 361.2 L186.5 361.4 L186.0 361.7 L185.5 362.1 L185.0 363.3 L184.5 367.3 L184.0 370.3 L183.5 373.0 L183.0 376.9 L182.5 379.4 L182.0 378.4 L181.5 377.0 L181.0 376.0 L180.5 375.8 L180.0 374.9 L179.5 372.0 L179.0 371.3 L178.5 375.5 L178.0 381.5 L177.5 391.1 L177.0 403.7 L176.5 420.0 L176.0 441.2 L175.5 468.8 L175.0 475.2 L174.5 475.2 L174.0 457.3 L173.5 422.9 L173.0 399.4 L172.5 383.5 L172.0 372.6 L171.5 365.3 L171.0 367.2 L170.5 371.1 L170.0 375.7 L169.5 381.6 L169.0 389.3 L168.5 401.2 L168.0 416.8 L167.5 432.6 L167.0 432.6 L166.5 432.6 L166.0 410.6 L165.5 391.1 L165.0 382.2 L164.5 381.1 L164.0 381.2 L163.5 382.5 L163.0 387.9 L162.5 393.6 L162.0 394.0 L161.5 394.2 L161.0 392.2 L160.5 402.4 L160.0 418.3 L159.5 425.9 L159.0 425.9 L158.5 420.2 L158.0 397.7 L157.5 382.3 L157.0 371.8 L156.5 364.7 L156.0 362.8 L155.5 364.3 L155.0 366.4 L154.5 367.8 L154.0 372.0 L153.5 378.7 L153.0 385.6 L152.5 385.6 L152.0 385.6 L151.5 376.0 L151.0 368.5 L150.5 367.4 L150.0 367.2 L149.5 367.5 L149.0 369.0 L148.5 371.0 L148.0 375.0 L147.5 380.9 L147.0 386.5 L146.5 394.9 L146.0 403.6 L145.5 418.7 L145.0 439.5 L144.5 466.6 L144.0 472.9 L143.5 472.9 L143.0 455.3 L142.5 421.5 L142.0 398.5 L141.5 382.9 L141.0 372.2 L140.5 366.3 L140.0 364.9 L139.5 363.5 L139.0 363.4 L138.5 364.5 L138.0 367.9 L137.5 370.0 L137.0 372.4 L136.5 376.3 L136.0 380.4 L135.5 383.6 L135.0 386.7 L134.5 386.8 L134.0 386.8 L133.5 387.7 L133.0 388.1 L132.5 388.4 L132.0 388.6 L131.5 389.0 L131.0 389.9 L130.5 391.9 L130.0 393.1 L129.5 394.2 L129.0 395.9 L128.5 391.8 L128.0 383.8 L127.5 375.8 L127.0 367.8 L126.5 359.9 L126.0 360.7 L125.5 361.4 L125.0 362.3 L124.5 364.1 L124.0 367.5 L123.5 371.4 L123.0 375.4 L122.5 378.4 L122.0 379.5 L121.5 376.9 L121.0 375.1 L120.5 372.5 L120.0 371.4 L119.5 371.8 L119.0 372.3 L118.5 372.8 L118.0 373.1 L117.5 378.7 L117.0 383.9 L116.5 388.7 L116.0 393.4 L115.5 401.6 L115.0 417.3 L114.5 437.7 L114.0 452.8 L113.5 452.8 L113.0 452.8 L112.5 419.8 L112.0 397.4 L111.5 382.1 L111.0 371.7 L110.5 364.6 L110.0 362.3 L109.5 363.8 L109.0 365.8 L108.5 367.5 L108.0 367.1 L107.5 366.6 L107.0 367.6 L106.5 368.7 L106.0 370.7 L105.5 373.0 L105.0 374.7 L104.5 376.3 L104.0 379.3 L103.5 381.0 L103.0 383.1 L102.5 389.2 L102.0 393.6 L101.5 393.6 L101.0 393.5 L100.5 393.5 L100.0 392.8 L99.5 404.4 L99.0 420.9 L98.5 424.8 L98.0 424.8 L97.5 414.1 L97.0 393.4 L96.5 379.4 L96.0 371.2 L95.5 367.7 L95.0 364.6 L94.5 361.5 L94.0 362.4 L93.5 363.2 L93.0 364.1 L92.5 364.9 L92.0 366.5 L91.5 368.3 L91.0 370.1 L90.5 373.1 L90.0 375.2 L89.5 371.9 L89.0 368.4 L88.5 365.8 L88.0 363.7 L87.5 365.9 L87.0 370.8 L86.5 377.2 L86.0 385.6 L85.5 396.4 L85.0 410.5 L84.5 428.9 L84.0 452.8 L83.5 452.8 L83.0 452.8 L82.5 431.5 L82.0 405.3 L81.5 387.5 L81.0 375.4 L80.5 367.1 L80.0 361.8Z" fill="#f1b705"/></g></svg>
<div class="abs" style="left:0;top:302.6px;width:551px;height:1px;background:rgba(190,130,0,0.35)"></div>
<div class="abs" style="left:240.8px;top:149.3px;width:2px;height:306.7px;background:#d9481a"></div>
<div class="abs" style="left:318.7px;top:149.3px;width:1px;height:306.7px;background:#f0a000"></div>
<div class="abs" style="left:182.9px;top:134px;width:1.2px;height:322px;background:#262626"></div>
<div class="abs" style="left:178.4px;top:284.7px;width:10.5px;height:32.7px;background:#eeeeee;border-radius:5px"></div>
<div class="abs" style="left:173.9px;top:291.5px;width:19.5px;height:19px;background:#eeeeee;border-radius:7px"></div>
<div class="abs" style="left:182.8px;top:284.7px;width:1.2px;height:32.7px;background:#222"></div>
<div class="abs" style="left:175.9px;top:293.8px;width:3px;height:13.4px;background:#8a8a8a;border-radius:1px"></div>
<div class="abs" style="left:187.4px;top:293.8px;width:3px;height:13.4px;background:#8a8a8a;border-radius:1px"></div>
<div class="abs" style="left:343.5px;top:134px;width:1.2px;height:322px;background:#262626"></div>
<div class="abs" style="left:339px;top:284.7px;width:10.5px;height:32.7px;background:#eeeeee;border-radius:5px"></div>
<div class="abs" style="left:334.5px;top:291.5px;width:19.5px;height:19px;background:#eeeeee;border-radius:7px"></div>
<div class="abs" style="left:343.4px;top:284.7px;width:1.2px;height:32.7px;background:#222"></div>
<div class="abs" style="left:336.5px;top:293.8px;width:3px;height:13.4px;background:#8a8a8a;border-radius:1px"></div>
<div class="abs" style="left:348px;top:293.8px;width:3px;height:13.4px;background:#8a8a8a;border-radius:1px"></div>
<div class="abs" style="left:264.9px;top:436.8px;width:31.5px;height:19.3px;border-radius:4.5px;background:linear-gradient(#6a6a6a,#585858);border:1px solid #383838"></div>
<div class="abs" style="left:273.8px;top:439.9px;width:12.6px;height:12.6px;border-radius:50%;background:radial-gradient(circle at 50% 40%,#f0f0f0,#cfcfcf);box-shadow:0 0 1px #333"></div>
<svg class="abs" style="left:264px;top:436px" width="34" height="22"><path d="M16.5 9L19.5 6" stroke="#3a3a3a" stroke-width="1.6" stroke-linecap="round"/><path d="M4 10.2H7.5" stroke="#9a9a9a" stroke-width="1.1"/><path d="M25.5 10.3H29.5M27.5 8.3V12.3" stroke="#9a9a9a" stroke-width="1.1"/></svg>
  <!-- bottom ruler -->
  <div class="abs" style="left:0;top:458px;width:552px;height:19px;background:#2b2b2b"></div>
  <div class="abs" style="left:0;top:477px;width:552px;height:14px;background:#2f2f2f"></div>
  <div class="abs" style="left:-0.10px;top:458px;width:1.2px;height:17px;background:#8e8e8e"></div>
<div class="rtxt" style="left:3.90px;top:468.6px">00:00.00</div>
<div class="abs" style="left:22.73px;top:458px;width:1.2px;height:7px;background:#8e8e8e"></div>
<div class="abs" style="left:45.57px;top:458px;width:1.2px;height:7px;background:#8e8e8e"></div>
<div class="abs" style="left:68.40px;top:458px;width:1.2px;height:7px;background:#8e8e8e"></div>
<div class="abs" style="left:91.23px;top:458px;width:1.2px;height:17px;background:#8e8e8e"></div>
<div class="rtxt" style="left:95.23px;top:468.6px">00:02.00</div>
<div class="abs" style="left:114.06px;top:458px;width:1.2px;height:7px;background:#8e8e8e"></div>
<div class="abs" style="left:136.90px;top:458px;width:1.2px;height:7px;background:#8e8e8e"></div>
<div class="abs" style="left:159.73px;top:458px;width:1.2px;height:7px;background:#8e8e8e"></div>
<div class="abs" style="left:182.56px;top:458px;width:1.2px;height:17px;background:#8e8e8e"></div>
<div class="rtxt" style="left:186.56px;top:468.6px">00:04.00</div>
<div class="abs" style="left:205.40px;top:458px;width:1.2px;height:7px;background:#8e8e8e"></div>
<div class="abs" style="left:228.23px;top:458px;width:1.2px;height:7px;background:#8e8e8e"></div>
<div class="abs" style="left:251.06px;top:458px;width:1.2px;height:7px;background:#8e8e8e"></div>
<div class="abs" style="left:273.90px;top:458px;width:1.2px;height:17px;background:#8e8e8e"></div>
<div class="rtxt" style="left:277.90px;top:468.6px">00:06.00</div>
<div class="abs" style="left:296.73px;top:458px;width:1.2px;height:7px;background:#8e8e8e"></div>
<div class="abs" style="left:319.56px;top:458px;width:1.2px;height:7px;background:#8e8e8e"></div>
<div class="abs" style="left:342.39px;top:458px;width:1.2px;height:7px;background:#8e8e8e"></div>
<div class="abs" style="left:365.23px;top:458px;width:1.2px;height:17px;background:#8e8e8e"></div>
<div class="rtxt" style="left:369.23px;top:468.6px">00:08.00</div>
<div class="abs" style="left:388.06px;top:458px;width:1.2px;height:7px;background:#8e8e8e"></div>
<div class="abs" style="left:410.89px;top:458px;width:1.2px;height:7px;background:#8e8e8e"></div>
<div class="abs" style="left:433.73px;top:458px;width:1.2px;height:7px;background:#8e8e8e"></div>
<div class="abs" style="left:456.56px;top:458px;width:1.2px;height:17px;background:#8e8e8e"></div>
<div class="rtxt" style="left:460.56px;top:468.6px">00:10.00</div>
<div class="abs" style="left:479.39px;top:458px;width:1.2px;height:7px;background:#8e8e8e"></div>
<div class="abs" style="left:502.23px;top:458px;width:1.2px;height:7px;background:#8e8e8e"></div>
<div class="abs" style="left:525.06px;top:458px;width:1.2px;height:7px;background:#8e8e8e"></div>
<div class="abs" style="left:547.89px;top:458px;width:1.2px;height:17px;background:#8e8e8e"></div>
<div class="rtxt" style="left:551.89px;top:468.6px">00:12.00</div><div class="abs" style="left:548.5px;top:458px;width:1.5px;height:17px;background:#999"></div>
  <!-- inspector -->
  <div class="abs" style="left:550.9px;top:58px;width:1.9px;height:433px;background:#7c7c7c"></div><div class="abs" style="left:552.8px;top:58px;width:0.8px;height:433px;background:#262626"></div>
  <div class="abs" style="left:553.6px;top:58px;width:261px;height:433px;background:#3a3a3a"></div>
  <div class="abs" style="left:553.6px;top:58px;width:261px;height:15px;background:#313131"></div><div class="abs" style="left:553.6px;top:73px;width:261px;height:0.8px;background:#272727"></div><div class="abs" style="left:553.6px;top:73.8px;width:261px;height:0.8px;background:#454545"></div>
<div class="abs" style="left:628.8px;top:67.2px;width:109px;height:14px;border-radius:3px;background:linear-gradient(#1f7cf0,#0e68e2);color:#e4eeff;font-size:9.8px;line-height:13.6px;text-align:center">Document Summary</div>
<svg class="abs" style="left:568px;top:91.6px" width="21" height="27" viewBox="0 0 21 27"><defs><linearGradient id="fg" x1="0" y1="0" x2="0" y2="1"><stop offset="0" stop-color="#f9d53a"/><stop offset="0.55" stop-color="#f8c21a"/><stop offset="1" stop-color="#f4b000"/></linearGradient></defs><path d="M0.5 0.5H13.5L20 7.5V26.2H0.5Z" fill="url(#fg)" stroke="#5a4a10" stroke-width="0.6"/><path d="M13.5 0.5L20 7.5H13.5Z" fill="#e8dcb0"/><path d="M2.5 13.5H7L8.2 16.5L11 8L13 14H17.5" fill="none" stroke="#7a5a00" stroke-width="1"/><text x="10.3" y="23.5" font-size="4.2" font-weight="bold" letter-spacing="0.8" text-anchor="middle" fill="#8a6400" font-family="Liberation Sans">AAC</text></svg>
<div class="abs" style="left:597.7px;top:97.3px;font-size:14.7px;color:#e2e2e2;line-height:17px;white-space:nowrap">interview 01.m4a</div>
<div class="abs" style="left:553.6px;top:125.5px;width:261px;height:1px;background:#464646"></div>
<div class="row" style="left:531.7px;top:134.5px;width:100px;height:12px"><b>Size:</b></div>
<div class="val" style="top:134.5px">251 KB</div>
<div class="row" style="left:531.7px;top:149.7px;width:100px;height:12px"><b>Format:</b></div>
<div class="val" style="top:149.7px">AAC</div>
<div class="row" style="left:531.7px;top:164.9px;width:100px;height:12px"><b>Bit Rate:</b></div>
<div class="val" style="top:164.9px">128 kbps (VBR)</div>
<div class="row" style="left:531.7px;top:180.2px;width:100px;height:12px"><b>Sample Rate:</b></div>
<div class="val" style="top:180.2px">44.1 kHz, 16-bit</div>
<div class="row" style="left:531.7px;top:195.4px;width:100px;height:12px"><b>Channels:</b></div>
<div class="val" style="top:195.4px">Stereo</div>
<div class="row" style="left:531.7px;top:211.2px;width:100px;height:12px"><b>Duration:</b></div>
<div class="val" style="top:211.2px">00:12.05</div>
<div class="row" style="left:531.7px;top:226.5px;width:100px;height:12px"><b>Lossless Edit:</b></div>
<div class="val" style="top:226.5px">Yes</div>
<div class="row" style="left:531.7px;top:241.8px;width:100px;height:12px"><b>Where:</b></div>
<div class="val" style="top:241.8px">/Users/neale/Dropbox (Personal)/</div>
<div class="val" style="top:253.6px">action items/Example Audio Files/</div>
<div class="val" style="top:266.3px">interview 01.m4a</div>
  <!-- bottom bar -->
  <div class="abs" style="left:0;top:491px;width:814px;height:43px;background:#3d3d3d;border-top:1px solid #444"></div>
  <svg class="abs" style="left:18.5px;top:505.5px" width="17" height="17" viewBox="0 0 17 17"><circle cx="10" cy="7" r="5.5" fill="none" stroke="#c2c2c2" stroke-width="1.4" transform="translate(0 0)"/><path d="M6 11L1.5 15.5" stroke="#c2c2c2" stroke-width="2" stroke-linecap="round"/><g transform="translate(3 0)"><path d="M4 7H10" stroke="#c2c2c2" stroke-width="1.4"/></g></svg>
<div class="abs" style="left:50px;top:510.3px;width:60px;height:2.8px;background:#363636;border-radius:1.5px 1.5px 0 0"></div><div class="abs" style="left:50px;top:513.1px;width:60px;height:1.5px;background:#5b5b5b"></div><div class="abs" style="left:50px;top:514.6px;width:60px;height:1.2px;background:#454545"></div><div class="abs" style="left:50px;top:515.8px;width:60px;height:1.5px;background:#5b5b5b;border-radius:0 0 1.5px 1.5px"></div>
<div class="abs" style="left:41px;top:506.5px;width:13.5px;height:13.5px;border-radius:50%;background:radial-gradient(circle at 50% 35%,#f4f4f4,#bdbdbd)"></div>
<svg class="abs" style="left:116.5px;top:505.5px" width="17" height="17" viewBox="0 0 17 17"><circle cx="10" cy="7" r="5.5" fill="none" stroke="#c2c2c2" stroke-width="1.4" transform="translate(0 0)"/><path d="M6 11L1.5 15.5" stroke="#c2c2c2" stroke-width="2" stroke-linecap="round"/><g transform="translate(3 0)"><path d="M4 7H10" stroke="#c2c2c2" stroke-width="1.4"/><path d="M7 4V10" stroke="#c2c2c2" stroke-width="1.4"/></g></svg>
<div class="abs" style="left:283px;top:502.8px;width:67px;height:17px;border-radius:4px;background:linear-gradient(#727272 0%,#5a5a5a 30%,#3a3a3a 52%,#2e2e2e 100%);box-shadow:0 1.2px 0 #5e5e5e"></div><div class="abs" style="left:296px;top:506.3px;font-size:10.3px;font-weight:bold;color:#d2d2d2;line-height:12px;white-space:nowrap">00:05.27</div>
<div class="abs" style="left:462.4px;top:502.8px;width:68px;height:17px;border-radius:4px;background:linear-gradient(#727272 0%,#5a5a5a 30%,#3a3a3a 52%,#2e2e2e 100%);box-shadow:0 1.2px 0 #5e5e5e"></div><div class="abs" style="left:473.8px;top:506.3px;font-size:10.3px;font-weight:bold;color:#d2d2d2;line-height:12px;white-space:nowrap">-00:06.78</div>
<div class="abs" style="left:357.8px;top:499px;width:97.5px;height:25px;border-radius:12.5px;background:linear-gradient(#fafafa,#cfcfcf)"></div>
<svg class="abs" style="left:690px;top:509px" width="8" height="9"><path d="M0 2.5H2.5L6.5 0V9L2.5 6.5H0Z" fill="#bdbdbd"/></svg>
<div class="abs" style="left:714px;top:510.8px;width:60px;height:2.8px;background:#363636;border-radius:1.5px 1.5px 0 0"></div><div class="abs" style="left:714px;top:513.6px;width:60px;height:1.5px;background:#5b5b5b"></div><div class="abs" style="left:714px;top:515.1px;width:60px;height:1.2px;background:#454545"></div><div class="abs" style="left:714px;top:516.3px;width:60px;height:1.5px;background:#5b5b5b;border-radius:0 0 1.5px 1.5px"></div>
<div class="abs" style="left:704.6px;top:506px;width:14px;height:14px;border-radius:50%;background:radial-gradient(circle at 50% 35%,#f4f4f4,#bdbdbd)"></div>
<svg class="abs" style="left:783.7px;top:508px" width="14" height="11"><path d="M0 3.5H2.5L6.5 1V10L2.5 7.5H0Z" fill="#bdbdbd"/><path d="M8.5 3.5Q9.8 5.5 8.5 7.5M10.5 2Q12.6 5.5 10.5 9" fill="none" stroke="#bdbdbd" stroke-width="1"/></svg>
</div>
<div class="gold" style="left:256.4px;top:517.4px"></div>
<div class="gold" style="left:443.1px;top:517px"></div>
<div class="gold" style="left:630.7px;top:517.2px"></div>
<svg class="abs" style="left:0;top:0" width="975" height="634"><defs><clipPath id="pv"><rect x="301.5" y="551" width="9" height="9.5"/></clipPath></defs><g fill="none" stroke="#2e2d2b" stroke-width="3.8" stroke-linecap="butt"><path d="M313.9 538.2L296.2 571" stroke-width="3.7" stroke-linecap="round"/><path d="M287.8 538.2L306 571" stroke="#e1b74b" stroke-width="6.4" stroke-linecap="butt" clip-path="url(#pv)"/><path d="M287.8 538.2L306 571" stroke-width="3.7" stroke-linecap="round"/><ellipse cx="288.6" cy="575.5" rx="7.9" ry="6.3" stroke-width="3.5"/><ellipse cx="313.6" cy="575.5" rx="7.9" ry="6.3" stroke-width="3.5"/></g><g fill="none" stroke="#2e2d2b" stroke-width="3.4"><path d="M472.5 536.2L480 543.1V577.8L472.5 585.6"/><path d="M503.7 536.2L496.2 543.1V577.8L503.7 585.6"/></g><g fill="none" stroke="#2e2d2b" stroke-width="3.2"><path d="M649 547.2H658.5"/><path d="M664.2 533.6V570.6H681"/><path d="M670.3 547.5H686.3V585.7"/><path d="M692 571H701.5"/></g></svg>
</body></html>
